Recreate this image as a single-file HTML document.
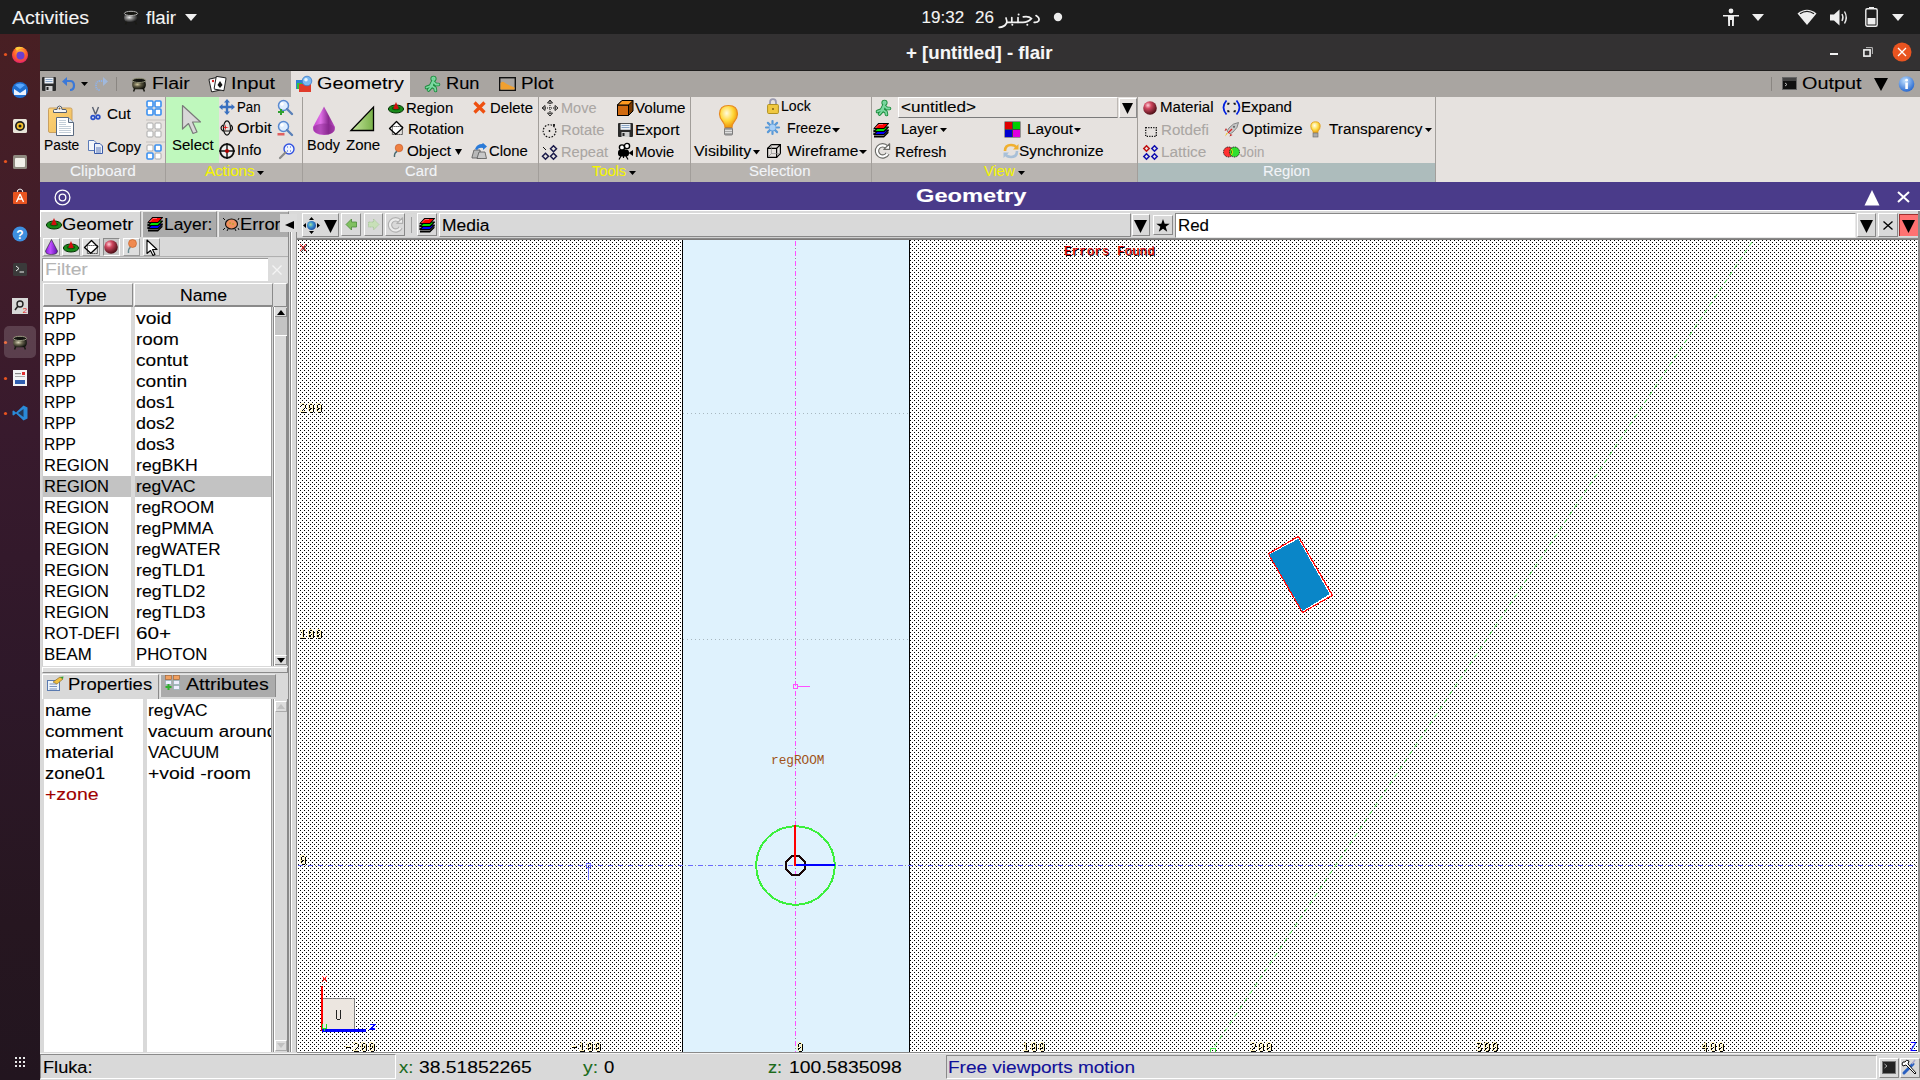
<!DOCTYPE html>
<html><head><meta charset="utf-8">
<style>
*{box-sizing:border-box;margin:0;padding:0}
html,body{width:1920px;height:1080px;overflow:hidden;background:#1d1d1d;font-family:"Liberation Sans",sans-serif;position:relative}
.a{position:absolute}
.t{position:absolute;white-space:nowrap;transform-origin:0 0;-webkit-text-stroke:0.1px currentColor}
svg{overflow:visible}
</style></head><body>
<div class="a" style="left:0px;top:0px;width:1920px;height:34px;background:#1d1d1d;"></div>
<div class="t" style="left:12.00px;top:9px;font:normal 18px/18px 'Liberation Sans';color:#f4f4f4;transform:scaleX(1.0845);">Activities</div>
<svg class="a" style="left:123px;top:10px;" width="16" height="15" viewBox="0 0 16 15"><defs><radialGradient id="pot" cx="0.38" cy="0.4" r="0.62"><stop offset="0" stop-color="#e8e8e8"/><stop offset="0.45" stop-color="#7a7a7a"/><stop offset="1" stop-color="#1a1a1a"/></radialGradient></defs><path d="M1.8 4.2Q0 9.5 3.2 12.3H12.8Q16 9.5 14.2 4.2Z" fill="url(#pot)"/><ellipse cx="8" cy="3.4" rx="6.6" ry="2.1" fill="#141410" stroke="#b0b0b0" stroke-width="1"/><path d="M3.6 11.8L2.6 14.6M12.4 11.8L13.4 14.6" stroke="#1a1a14" stroke-width="1.5"/></svg>
<div class="t" style="left:146.00px;top:9px;font:normal 18px/18px 'Liberation Sans';color:#f4f4f4;transform:scaleX(1.0345);">flair</div>
<svg class="a" style="left:185px;top:14px;" width="12" height="7" viewBox="0 0 12 7"><path d="M0 0H12L6.0 7Z" fill="#f0f0f0"/></svg>
<div class="t" style="left:921.60px;top:9px;font:normal 17px/17px 'Liberation Sans';color:#f4f4f4;">19:32</div>
<div class="t" style="left:975.00px;top:9px;font:normal 17px/17px 'Liberation Sans';color:#f4f4f4;">26</div>
<svg class="a" style="left:996px;top:6px;" width="46" height="24" viewBox="0 0 46 24"><g fill="none" stroke="#f2f2f2" stroke-width="1.7" stroke-linecap="round"><path d="M40 9.6Q44 12 42.8 14.8Q41.5 16.6 38.2 16.3"/><path d="M27.3 10.9Q33 10 35.4 12.6Q32 16.3 27 16.3H11"/><path d="M15.8 11.6V16.3M22 11.6V16.3"/><path d="M10 12Q11.2 15 10.6 17Q8.5 21.2 3.2 21.3"/></g><circle cx="22.6" cy="8.4" r="1" fill="#f2f2f2"/><circle cx="16.3" cy="18.8" r="1" fill="#f2f2f2"/><circle cx="31.3" cy="18.8" r="1" fill="#f2f2f2"/></svg>
<svg class="a" style="left:1053px;top:12px;" width="10" height="10" viewBox="0 0 10 10"><circle cx="5" cy="5" r="4.2" fill="#ececec"/></svg>
<svg class="a" style="left:1723px;top:8px;" width="16" height="18" viewBox="0 0 16 18"><circle cx="8" cy="3" r="2.4" fill="#eee"/><path d="M0 7H16V8.6H11V11L10.8 18H9V12H7V18H5.2L5 11V8.6H0Z" fill="#eee"/></svg>
<svg class="a" style="left:1752px;top:14px;" width="12" height="7" viewBox="0 0 12 7"><path d="M0 0H12L6.0 7Z" fill="#eee"/></svg>
<svg class="a" style="left:1797px;top:9px;" width="20" height="17" viewBox="0 0 20 17"><path d="M10 16L0.5 4.5Q10 -3 19.5 4.5Z" fill="#eee"/><path d="M3 4.8Q10 0 17 4.8" stroke="#1d1d1d" stroke-width="1.2" fill="none"/></svg>
<svg class="a" style="left:1830px;top:9px;" width="19" height="17" viewBox="0 0 19 17"><path d="M0 5.5H4L9.5 0.5V16.5L4 11.5H0Z" fill="#eee"/><path d="M12 5Q14 8.5 12 12" stroke="#eee" stroke-width="1.4" fill="none"/><path d="M14.5 2.5Q18 8.5 14.5 14.5" stroke="#eee" stroke-width="1.4" fill="none"/></svg>
<svg class="a" style="left:1865px;top:7px;" width="13" height="20" viewBox="0 0 13 20"><rect x="4" y="0" width="5" height="2" fill="#eee"/><rect x="0.8" y="1.8" width="11.4" height="17.4" rx="1.5" fill="none" stroke="#eee" stroke-width="1.4"/><rect x="2.5" y="11" width="8" height="6.5" fill="#eee"/></svg>
<svg class="a" style="left:1892px;top:14px;" width="12" height="7" viewBox="0 0 12 7"><path d="M0 0H12L6.0 7Z" fill="#eee"/></svg>
<div class="a" style="left:0px;top:34px;width:40px;height:1046px;background:linear-gradient(#481f23 0%,#421d29 18%,#381a2d 38%,#2e1829 62%,#261620 85%,#22151f 100%);"></div>
<svg class="a" style="left:3px;top:52px;" width="5" height="5" viewBox="0 0 5 5"><circle cx="2.5" cy="2.5" r="1.6" fill="#e95420"/></svg>
<svg class="a" style="left:3px;top:159px;" width="5" height="5" viewBox="0 0 5 5"><circle cx="2.5" cy="2.5" r="1.6" fill="#e95420"/></svg>
<svg class="a" style="left:3px;top:340px;" width="5" height="5" viewBox="0 0 5 5"><circle cx="2.5" cy="2.5" r="1.6" fill="#e95420"/></svg>
<svg class="a" style="left:3px;top:376px;" width="5" height="5" viewBox="0 0 5 5"><circle cx="2.5" cy="2.5" r="1.6" fill="#e95420"/></svg>
<svg class="a" style="left:3px;top:411px;" width="5" height="5" viewBox="0 0 5 5"><circle cx="2.5" cy="2.5" r="1.6" fill="#e95420"/></svg>
<svg class="a" style="left:11px;top:45px;" width="18" height="18" viewBox="0 0 18 18"><defs><radialGradient id="ff" cx="0.5" cy="0.3" r="0.7"><stop offset="0" stop-color="#ffbd3a"/><stop offset="0.6" stop-color="#ff5a2a"/><stop offset="1" stop-color="#e3226e"/></radialGradient></defs><circle cx="9" cy="10" r="8" fill="url(#ff)"/><circle cx="9.5" cy="10.5" r="4" fill="#6b3fd0"/><path d="M4 3Q9 0 14 4Q9 2 6 6Z" fill="#ffca3a"/></svg>
<svg class="a" style="left:12px;top:82px;" width="16" height="16" viewBox="0 0 16 16"><circle cx="8" cy="8" r="8" fill="#1f6fd0"/><path d="M2 7L8 11L14 7V13H2Z" fill="#eaf2ff"/><path d="M3 3Q8 0 13 3L8 7Z" fill="#5aa8ff"/></svg>
<svg class="a" style="left:13px;top:119px;" width="14" height="14" viewBox="0 0 14 14"><rect width="14" height="14" rx="1.5" fill="#e8e4d8"/><circle cx="7" cy="7" r="5" fill="#1e1e1e"/><circle cx="7" cy="7" r="3.3" fill="#f5c02a"/><circle cx="7" cy="7" r="1.5" fill="#1e1e1e"/></svg>
<svg class="a" style="left:13px;top:155px;" width="14" height="14" viewBox="0 0 14 14"><rect width="14" height="14" rx="1.5" fill="#8f8a80"/><rect x="2" y="3" width="10" height="9" rx="1" fill="#f2f0ea"/></svg>
<svg class="a" style="left:13px;top:189px;" width="14" height="15" viewBox="0 0 14 15"><path d="M4 4Q4 0 7 0Q10 0 10 4" stroke="#f2f2f2" stroke-width="1" fill="none"/><rect y="3" width="14" height="12" rx="1" fill="#e95420"/><path d="M7 5L3.5 13M7 5L10.5 13M4.8 10H9.2" stroke="#fff" stroke-width="1.3"/></svg>
<svg class="a" style="left:12px;top:226px;" width="16" height="16" viewBox="0 0 16 16"><circle cx="8" cy="8" r="7.5" fill="#3d8fe0"/><text x="8" y="12.5" font-family="Liberation Sans" font-weight="bold" font-size="12" fill="#fff" text-anchor="middle">?</text></svg>
<svg class="a" style="left:13px;top:263px;" width="14" height="13" viewBox="0 0 14 13"><rect width="14" height="13" rx="1.5" fill="#3a3a3a"/><path d="M3 3L6 5.5L3 8" stroke="#eee" stroke-width="1" fill="none"/><path d="M6.5 9H11" stroke="#eee" stroke-width="1"/></svg>
<svg class="a" style="left:12px;top:298px;" width="16" height="16" viewBox="0 0 16 16"><rect width="16" height="16" fill="#d8d8d8"/><circle cx="8" cy="6" r="3" fill="none" stroke="#222" stroke-width="1.4"/><path d="M6 8L3 12" stroke="#222" stroke-width="1.6"/><text x="13" y="15" font-family="Liberation Sans" font-size="8" fill="#e02020" text-anchor="middle">2</text></svg>
<div class="a" style="left:4px;top:326px;width:32px;height:32px;background:rgba(255,255,255,0.16);border-radius:5px"></div>
<svg class="a" style="left:12px;top:335px;" width="16" height="15" viewBox="0 0 16 15"><defs><radialGradient id="pot2" cx="0.38" cy="0.4" r="0.62"><stop offset="0" stop-color="#d8d4b8"/><stop offset="0.45" stop-color="#6a6650"/><stop offset="1" stop-color="#141410"/></radialGradient></defs><path d="M1.8 4.2Q0 9.5 3.2 12.3H12.8Q16 9.5 14.2 4.2Z" fill="url(#pot2)"/><ellipse cx="8" cy="3.4" rx="6.6" ry="2.1" fill="#141410" stroke="#9a9880" stroke-width="1"/><path d="M3.6 11.8L2.6 14.6M12.4 11.8L13.4 14.6" stroke="#1a1a14" stroke-width="1.5"/></svg>
<svg class="a" style="left:13px;top:370px;" width="14" height="16" viewBox="0 0 14 16"><rect width="14" height="16" fill="#f4f4f4"/><rect x="2" y="3" width="6" height="1.2" fill="#888"/><rect x="2" y="6" width="10" height="1" fill="#aaa"/><rect x="9" y="2" width="3" height="3" fill="#e03030"/><rect x="2" y="10" width="10" height="4" fill="#3060b0"/></svg>
<svg class="a" style="left:12px;top:405px;" width="16" height="16" viewBox="0 0 16 16"><path d="M11.5 0.5L15.5 2.5V13.5L11.5 15.5L4 8.5L1.5 10.5L0.5 10V6L1.5 5.5L4 7.5Z" fill="#2a8ad8"/><path d="M11.5 4L6 8L11.5 12Z" fill="#22151f" opacity="0.7"/></svg>
<svg class="a" style="left:15px;top:1057px;" width="10" height="10" viewBox="0 0 10 10"><rect x="0" y="0" width="2" height="2" fill="#e8e8e8"/><rect x="0" y="4" width="2" height="2" fill="#e8e8e8"/><rect x="0" y="8" width="2" height="2" fill="#e8e8e8"/><rect x="4" y="0" width="2" height="2" fill="#e8e8e8"/><rect x="4" y="4" width="2" height="2" fill="#e8e8e8"/><rect x="4" y="8" width="2" height="2" fill="#e8e8e8"/><rect x="8" y="0" width="2" height="2" fill="#e8e8e8"/><rect x="8" y="4" width="2" height="2" fill="#e8e8e8"/><rect x="8" y="8" width="2" height="2" fill="#e8e8e8"/></svg>
<div class="a" style="left:40px;top:34px;width:1880px;height:37px;background:#333132;"></div>
<div class="a" style="left:40px;top:70px;width:1880px;height:1px;background:#1e1d1d;"></div>
<div class="t" style="left:906.40px;top:43px;font:bold 19px/19px 'Liberation Sans';color:#f6f6f6;transform:scaleX(0.9807);">+ [untitled] - flair</div>
<div class="a" style="left:1830px;top:53px;width:8px;height:2px;background:#f2f2f2;"></div>
<svg class="a" style="left:1863px;top:47px;" width="10" height="10" viewBox="0 0 10 10"><rect x="0.9" y="2.9" width="6.2" height="6.2" fill="none" stroke="#f2f2f2" stroke-width="1.6"/><path d="M3 0.6H9.4V7" fill="none" stroke="#bbb" stroke-width="1"/></svg>
<svg class="a" style="left:1892px;top:42px;" width="20" height="20" viewBox="0 0 20 20"><circle cx="10" cy="10" r="9.5" fill="#e95420"/><path d="M6 6L14 14M14 6L6 14" stroke="#fff" stroke-width="1.3"/></svg>
<div class="a" style="left:40px;top:71px;width:1880px;height:26px;background:#a9a5a1;"></div>
<div class="a" style="left:291px;top:71px;width:119px;height:26px;background:#e6e2df;"></div>
<svg class="a" style="left:42px;top:77px;" width="14" height="14" viewBox="0 0 14 14"><rect width="14" height="14" rx="1" fill="#2a2a2a"/><rect x="2.5" y="0.5" width="9" height="6" fill="#eef2f8"/><path d="M3.5 2.5H10.5M3.5 4.5H10.5" stroke="#7090b8" stroke-width="0.8"/><rect x="3.5" y="9" width="7" height="5" fill="#cfcfcf"/><rect x="4.5" y="10" width="2" height="3" fill="#222"/></svg>
<svg class="a" style="left:62px;top:77px;" width="13" height="14" viewBox="0 0 13 14"><path d="M4 4H8Q12 4 12 8.5Q12 13 8 13" stroke="#3a78d8" stroke-width="2.2" fill="none"/><path d="M0 4.5L5 0V9Z" fill="#3a78d8"/></svg>
<svg class="a" style="left:81px;top:82px;" width="7" height="4" viewBox="0 0 7 4"><path d="M0 0H7L3.5 4Z" fill="#000"/></svg>
<svg class="a" style="left:95px;top:77px;" width="13" height="14" viewBox="0 0 13 14"><path d="M9 4H5Q1 4 1 8.5Q1 13 5 13" stroke="#8fb2e8" stroke-width="1.8" fill="none" stroke-dasharray="1.2 0.8"/><path d="M13 4.5L8 0V9Z" fill="#9fbde8" opacity="0.8"/></svg>
<div class="a" style="left:116px;top:77px;width:1px;height:14px;background:#8a8682;"></div>
<svg class="a" style="left:131px;top:77px;" width="16" height="15" viewBox="0 0 16 15"><defs><radialGradient id="pot3" cx="0.38" cy="0.4" r="0.62"><stop offset="0" stop-color="#d0c8a0"/><stop offset="0.45" stop-color="#5a5640"/><stop offset="1" stop-color="#12120c"/></radialGradient></defs><path d="M1.8 4.2Q0 9.5 3.2 12.3H12.8Q16 9.5 14.2 4.2Z" fill="url(#pot3)"/><ellipse cx="8" cy="3.4" rx="6.6" ry="2.1" fill="#141410" stroke="#8a8a70" stroke-width="1"/><path d="M3.6 11.8L2.6 14.6M12.4 11.8L13.4 14.6" stroke="#1a1a14" stroke-width="1.5"/></svg>
<div class="t" style="left:152.30px;top:75px;font:normal 17px/17px 'Liberation Sans';color:#000;transform:scaleX(1.1424);">Flair</div>
<svg class="a" style="left:209px;top:76px;" width="18" height="16" viewBox="0 0 18 16"><rect x="1" y="2" width="10" height="13" rx="1" fill="#fff" stroke="#222" stroke-width="1" transform="rotate(-12 6 8)"/><rect x="6" y="1" width="10" height="13" rx="1" fill="#fff" stroke="#222" stroke-width="1" transform="rotate(10 11 8)"/><path d="M11 5L13.5 9L11 12L8.5 9Z" fill="#111"/><circle cx="4" cy="5" r="1.2" fill="#d02020"/></svg>
<div class="t" style="left:230.70px;top:75px;font:normal 17px/17px 'Liberation Sans';color:#000;transform:scaleX(1.1658);">Input</div>
<svg class="a" style="left:296px;top:76px;" width="17" height="16" viewBox="0 0 17 16"><rect x="0" y="4" width="8" height="9" fill="#2f7fd0"/><rect x="1" y="7" width="5" height="6" fill="#30c040"/><rect x="3" y="8" width="12" height="8" fill="#e03a2a"/><circle cx="11" cy="5" r="4.8" fill="#7ab8f0" stroke="#3a78c8" stroke-width="0.8"/><circle cx="10" cy="3.8" r="1.8" fill="#e8f4ff"/></svg>
<div class="t" style="left:316.70px;top:75px;font:normal 17px/17px 'Liberation Sans';color:#000;transform:scaleX(1.1640);">Geometry</div>
<svg class="a" style="left:425px;top:76px;" width="15" height="16" viewBox="0 0 15 16"><g stroke-linecap="round" stroke-linejoin="round" fill="none"><g stroke="#1a8a3a" stroke-width="3.6"><circle cx="8.5" cy="2.8" r="1.3"/><path d="M7.8 5.5L5.5 10L1.5 11.5M7.8 5.5L11 8.5L13.5 8.5M7.8 5.5L7 10L10 12L10.5 14.5M7 10L3.5 14"/></g><g stroke="#7ad8a0" stroke-width="1.8"><circle cx="8.5" cy="2.8" r="1.3"/><path d="M7.8 5.5L5.5 10L1.5 11.5M7.8 5.5L11 8.5L13.5 8.5M7.8 5.5L7 10L10 12L10.5 14.5M7 10L3.5 14"/></g></g></svg>
<div class="t" style="left:445.70px;top:75px;font:normal 17px/17px 'Liberation Sans';color:#000;transform:scaleX(1.0742);">Run</div>
<svg class="a" style="left:499px;top:77px;" width="17" height="14" viewBox="0 0 17 14"><rect x="0.7" y="0.7" width="15.6" height="12.6" fill="none" stroke="#111" stroke-width="1.4"/><path d="M1.5 12.5V6Q3.5 4 5.5 5.5Q8 7.5 11 8.5Q13 9.5 15.5 10.5V12.5Z" fill="#f0a030"/></svg>
<div class="t" style="left:520.70px;top:75px;font:normal 17px/17px 'Liberation Sans';color:#000;transform:scaleX(1.1100);">Plot</div>
<div class="a" style="left:1771px;top:77px;width:1px;height:14px;background:#8a8682;"></div>
<svg class="a" style="left:1782px;top:77px;" width="15" height="13" viewBox="0 0 15 13"><rect x="0.5" y="0.5" width="14" height="12" fill="#111" stroke="#666" stroke-width="1"/><rect x="1" y="1" width="13" height="3" fill="#444"/><path d="M3 6L5 7.5L3 9" stroke="#ddd" stroke-width="0.8" fill="none"/></svg>
<div class="t" style="left:1802.30px;top:75px;font:normal 17px/17px 'Liberation Sans';color:#000;transform:scaleX(1.1647);">Output</div>
<svg class="a" style="left:1874px;top:78px;" width="14" height="13" viewBox="0 0 14 13"><path d="M0 0H14L7.0 13Z" fill="#000"/></svg>
<svg class="a" style="left:1898px;top:76px;" width="17" height="16" viewBox="0 0 17 16"><defs><radialGradient id="inf" cx="0.4" cy="0.3" r="0.7"><stop offset="0" stop-color="#bfe0ff"/><stop offset="1" stop-color="#2a6ad0"/></radialGradient></defs><circle cx="8.5" cy="8" r="7.8" fill="url(#inf)"/><rect x="7.3" y="6.5" width="2.6" height="6.5" fill="#fff"/><circle cx="8.6" cy="4.2" r="1.4" fill="#fff"/></svg>
<div class="a" style="left:40px;top:97px;width:1880px;height:66px;background:#e6e2df;"></div>
<div class="a" style="left:40px;top:163px;width:1098px;height:19px;background:#b8b4b0;"></div>
<div class="a" style="left:1138px;top:163px;width:298px;height:19px;background:#adbcbc;"></div>
<div class="a" style="left:1436px;top:163px;width:484px;height:19px;background:#e6e2df;"></div>
<div class="a" style="left:165px;top:97px;width:1px;height:85px;background:#a29e9a;"></div>
<div class="a" style="left:302px;top:97px;width:1px;height:85px;background:#a29e9a;"></div>
<div class="a" style="left:538px;top:97px;width:1px;height:85px;background:#a29e9a;"></div>
<div class="a" style="left:690px;top:97px;width:1px;height:85px;background:#a29e9a;"></div>
<div class="a" style="left:871px;top:97px;width:1px;height:85px;background:#a29e9a;"></div>
<div class="a" style="left:1137px;top:97px;width:1px;height:85px;background:#a29e9a;"></div>
<div class="a" style="left:1435px;top:97px;width:1px;height:85px;background:#a29e9a;"></div>
<div class="a" style="left:146px;top:119px;width:19px;height:2px;background:#d6d2cf;"></div>
<div class="a" style="left:146px;top:141px;width:19px;height:2px;background:#d6d2cf;"></div>
<div class="a" style="left:166px;top:97px;width:53px;height:66px;background:#bff8bd;"></div>
<svg class="a" style="left:48px;top:105px;" width="27" height="32" viewBox="0 0 27 32"><defs><linearGradient id="clipg" x1="0" y1="0" x2="1" y2="1"><stop offset="0" stop-color="#ffd47a"/><stop offset="1" stop-color="#eebc5a"/></linearGradient></defs><rect x="0.5" y="3" width="23.5" height="24.5" rx="1.5" fill="url(#clipg)" stroke="#c9a060" stroke-width="1"/><path d="M5.5 7.5H18.5V5.5Q18.5 4.5 17 4.5H14Q14 1 11.5 1Q9 1 9 4.5H6.5Q5.5 4.5 5.5 5.5Z" fill="#f4f6f8" stroke="#556070" stroke-width="1"/><circle cx="11.5" cy="3.6" r="1" fill="#8a5a20"/><path d="M8.5 12.5H20.5L25.5 17.5V30.5H8.5Z" fill="#fff" stroke="#5a6a80" stroke-width="1"/><path d="M20.5 12.5V17.5H25.5" fill="#dde6f0" stroke="#5a6a80" stroke-width="1"/><path d="M11 15.5H18M11 17.5H18M11 19.5H18M11 21.5H23M11 23.5H23M11 25.5H23M11 27.5H23" stroke="#bcc8d4" stroke-width="0.9"/></svg>
<div class="t" style="left:43.50px;top:138px;font:normal 14px/14px 'Liberation Sans';color:#000;transform:scaleX(0.9861);">Paste</div>
<svg class="a" style="left:90px;top:106px;" width="11" height="15" viewBox="0 0 11 15"><path d="M2.5 1L5.5 8.5M8.5 1L5.5 8.5" stroke="#5a6070" stroke-width="1.4"/><circle cx="3" cy="11.5" r="2.7" fill="#2a50c8"/><circle cx="8" cy="11" r="2.7" fill="#2a50c8"/><circle cx="3" cy="11.5" r="0.9" fill="#e8ecf4"/><circle cx="8" cy="11" r="0.9" fill="#e8ecf4"/></svg>
<div class="t" style="left:106.50px;top:107px;font:normal 14px/14px 'Liberation Sans';color:#000;transform:scaleX(1.0909);">Cut</div>
<svg class="a" style="left:88px;top:140px;" width="16" height="14" viewBox="0 0 16 14"><path d="M0.5 0.5H6L8.5 3V10.5H0.5Z" fill="#f4f6fa" stroke="#5a7ab8" stroke-width="1"/><path d="M6.5 3.5H12L14.5 6V13.5H6.5Z" fill="#e8eef8" stroke="#3a5aa8" stroke-width="1"/><path d="M8 8H13M8 10H13M8 12H13" stroke="#3a5aa8" stroke-width="0.8"/></svg>
<div class="t" style="left:106.50px;top:140px;font:normal 14px/14px 'Liberation Sans';color:#000;transform:scaleX(1.0394);">Copy</div>
<svg class="a" style="left:146px;top:100px;" width="16" height="16" viewBox="0 0 16 16"><rect x="1" y="1" width="6" height="6" rx="1" fill="#fff" stroke="#3a90f0" stroke-width="1.6"/><rect x="9" y="1" width="6" height="6" rx="1" fill="#fff" stroke="#3a90f0" stroke-width="1.6"/><rect x="1" y="9" width="6" height="6" rx="1" fill="#fff" stroke="#3a90f0" stroke-width="1.6"/><rect x="9" y="9" width="6" height="6" rx="1" fill="#fff" stroke="#3a90f0" stroke-width="1.6"/></svg>
<svg class="a" style="left:146px;top:122px;" width="16" height="16" viewBox="0 0 16 16"><rect x="1" y="1" width="6" height="6" rx="1" fill="#fff" stroke="#aaa" stroke-width="1"/><rect x="9" y="1" width="6" height="6" rx="1" fill="#fff" stroke="#aaa" stroke-width="1"/><rect x="1" y="9" width="6" height="6" rx="1" fill="#fff" stroke="#aaa" stroke-width="1"/><rect x="9" y="9" width="6" height="6" rx="1" fill="#fff" stroke="#aaa" stroke-width="1"/></svg>
<svg class="a" style="left:146px;top:144px;" width="16" height="16" viewBox="0 0 16 16"><rect x="1" y="1" width="6" height="6" rx="1" fill="#fff" stroke="#aaa" stroke-width="1"/><rect x="9" y="1" width="6" height="6" rx="1" fill="#fff" stroke="#3a90f0" stroke-width="1.6"/><rect x="1" y="9" width="6" height="6" rx="1" fill="#fff" stroke="#3a90f0" stroke-width="1.6"/><rect x="9" y="9" width="6" height="6" rx="1" fill="#fff" stroke="#aaa" stroke-width="1"/></svg>
<div class="t" style="left:69.50px;top:164px;font:normal 14px/14px 'Liberation Sans';color:#f2f4f8;transform:scaleX(1.0967);">Clipboard</div>
<svg class="a" style="left:181px;top:104px;" width="21" height="31" viewBox="0 0 21 31"><path d="M1.5 1.5L19.5 18H11.5L16 28L12 29.5L7.5 19.5L1.5 25Z" fill="#d8d8d8" stroke="#7a7a7a" stroke-width="1.2" stroke-linejoin="round"/></svg>
<div class="t" style="left:171.80px;top:138px;font:normal 14px/14px 'Liberation Sans';color:#000;transform:scaleX(1.0692);">Select</div>
<svg class="a" style="left:219px;top:99px;" width="16" height="16" viewBox="0 0 16 16"><path d="M8 0L11 3.5H9.2V6.8H12.5V5L16 8L12.5 11V9.2H9.2V12.5H11L8 16L5 12.5H6.8V9.2H3.5V11L0 8L3.5 5V6.8H6.8V3.5H5Z" fill="#3a70c0"/></svg>
<div class="t" style="left:236.80px;top:100px;font:normal 14px/14px 'Liberation Sans';color:#000;transform:scaleX(0.9440);">Pan</div>
<svg class="a" style="left:219px;top:120px;" width="16" height="16" viewBox="0 0 16 16"><ellipse cx="8" cy="8" rx="3.5" ry="7.2" fill="none" stroke="#111" stroke-width="1.2"/><path d="M4 5Q0 8 4 11H12Q15 8 12 5" fill="none" stroke="#111" stroke-width="1.2"/><path d="M7 8L4 7.5L7 7L7.5 4L8 7L11 7.5L8 8L7.5 11Z" fill="#e01010" transform="translate(-1 0)"/></svg>
<div class="t" style="left:237.00px;top:121px;font:normal 14px/14px 'Liberation Sans';color:#000;transform:scaleX(1.1467);">Orbit</div>
<svg class="a" style="left:219px;top:143px;" width="16" height="16" viewBox="0 0 16 16"><circle cx="8" cy="8" r="6.8" fill="#f0f0f0" stroke="#111" stroke-width="1.8"/><path d="M8 0V16M0 8H16" stroke="#111" stroke-width="1.4"/><circle cx="8" cy="8" r="2" fill="#b00000"/></svg>
<div class="t" style="left:237.00px;top:143px;font:normal 14px/14px 'Liberation Sans';color:#000;transform:scaleX(1.0417);">Info</div>
<svg class="a" style="left:277px;top:99px;" width="16" height="16" viewBox="0 0 16 16"><circle cx="6.5" cy="6.5" r="5" fill="#dfeeff" stroke="#5a8ad0" stroke-width="1.5"/><circle cx="5" cy="5" r="1.8" fill="#fff"/><path d="M10 10L15 15" stroke="#5a80b8" stroke-width="2.4" stroke-linecap="round"/><path d="M4 10V16M1 13H7" stroke="#30a030" stroke-width="2"/></svg>
<svg class="a" style="left:277px;top:120px;" width="16" height="16" viewBox="0 0 16 16"><circle cx="6.5" cy="6.5" r="5" fill="#dfeeff" stroke="#5a8ad0" stroke-width="1.5"/><circle cx="5" cy="5" r="1.8" fill="#fff"/><path d="M10 10L15 15" stroke="#5a80b8" stroke-width="2.4" stroke-linecap="round"/><rect x="0.5" y="13" width="7" height="2.5" fill="#e06060"/></svg>
<svg class="a" style="left:279px;top:143px;" width="16" height="16" viewBox="0 0 16 16"><circle cx="10" cy="6" r="5" fill="#eef4ff" stroke="#3050e0" stroke-width="1.4"/><path d="M8 4H9M11 4H12M8 8H9M11 8H12" stroke="#3050e0" stroke-width="1.2"/><path d="M6.5 9.5L1 15" stroke="#8a8a8a" stroke-width="2.2" stroke-linecap="round"/></svg>
<div class="t" style="left:205.30px;top:164px;font:normal 14px/14px 'Liberation Sans';color:#f4f400;transform:scaleX(1.0783);">Actions</div>
<svg class="a" style="left:257px;top:171px;" width="7" height="4" viewBox="0 0 7 4"><path d="M0 0H7L3.5 4Z" fill="#000"/></svg>
<svg class="a" style="left:311px;top:106px;" width="26" height="30" viewBox="0 0 26 30"><defs><linearGradient id="cone" x1="0" x2="1"><stop offset="0" stop-color="#c040c8"/><stop offset="0.35" stop-color="#e070e8"/><stop offset="0.7" stop-color="#8a2a90"/><stop offset="1" stop-color="#c050c8"/></linearGradient></defs><path d="M13 0.5L24 21Q24 29 13 29Q2 29 2 21Z" fill="url(#cone)"/><ellipse cx="13" cy="23" rx="11" ry="5.5" fill="#8a2890" opacity="0.5"/></svg>
<div class="t" style="left:306.70px;top:138px;font:normal 14px/14px 'Liberation Sans';color:#000;transform:scaleX(1.0312);">Body</div>
<svg class="a" style="left:350px;top:106px;" width="25" height="26" viewBox="0 0 25 26"><defs><linearGradient id="zn" x1="0" x2="1"><stop offset="0" stop-color="#c8e8a0"/><stop offset="1" stop-color="#78b048"/></linearGradient></defs><path d="M1 24.5L23.5 1V24.5Z" fill="url(#zn)" stroke="#000" stroke-width="1.3"/></svg>
<div class="t" style="left:346.00px;top:138px;font:normal 14px/14px 'Liberation Sans';color:#000;transform:scaleX(1.0719);">Zone</div>
<svg class="a" style="left:388px;top:101px;" width="16" height="13" viewBox="0 0 16 13"><ellipse cx="8" cy="8" rx="7.6" ry="4" fill="#1a8a1a" stroke="#043004" stroke-width="1"/><ellipse cx="8" cy="7.4" rx="4.2" ry="1.8" fill="#0a5a0a"/><path d="M5.2 7.5L8 1L10.8 7.5Q8 9 5.2 7.5Z" fill="#d01010"/></svg>
<div class="t" style="left:406.20px;top:101px;font:normal 14px/14px 'Liberation Sans';color:#000;transform:scaleX(1.0636);">Region</div>
<svg class="a" style="left:473px;top:101px;" width="13" height="13" viewBox="0 0 13 13"><path d="M1.5 1.5L11.5 11.5M11.5 1.5L1.5 11.5" stroke="#ee5010" stroke-width="3.2"/></svg>
<div class="t" style="left:489.50px;top:101px;font:normal 14px/14px 'Liberation Sans';color:#000;transform:scaleX(1.0610);">Delete</div>
<svg class="a" style="left:389px;top:121px;" width="15" height="15" viewBox="0 0 15 15"><path d="M7.5 0.5L13.8 6.8L6.8 13.2L0.5 7.5Z" fill="#fff" stroke="#000" stroke-width="1.3" stroke-linejoin="round"/><rect x="3.4" y="5.5" width="10" height="8" fill="none" stroke="#000" stroke-width="1.1" stroke-dasharray="1 1"/></svg>
<div class="t" style="left:407.50px;top:122px;font:normal 14px/14px 'Liberation Sans';color:#000;transform:scaleX(1.0731);">Rotation</div>
<svg class="a" style="left:393px;top:144px;" width="10" height="15" viewBox="0 0 10 15"><circle cx="6" cy="4" r="3.8" fill="#f08040" stroke="#c05020" stroke-width="0.6"/><path d="M4 7.5Q1 9 1.5 13" stroke="#4a6a70" stroke-width="1.4" fill="none"/></svg>
<div class="t" style="left:406.60px;top:144px;font:normal 14px/14px 'Liberation Sans';color:#000;transform:scaleX(1.0902);">Object</div>
<svg class="a" style="left:455px;top:149px;" width="7" height="6" viewBox="0 0 7 6"><path d="M0 0H7L3.5 6Z" fill="#000"/></svg>
<svg class="a" style="left:471px;top:143px;" width="17" height="16" viewBox="0 0 17 16"><path d="M1 14L3 7H9L10 15H1Z" fill="#b8b8b8" stroke="#555" stroke-width="0.8"/><path d="M6 15.5L8 9H14L15.5 15.5Z" fill="#c8c8c8" stroke="#555" stroke-width="0.8"/><path d="M4 6Q6 1 11 1L12 0L16 3.5L12 7L12 5Q8 4 6 7Z" fill="#2a7ad8"/></svg>
<div class="t" style="left:489.00px;top:144px;font:normal 14px/14px 'Liberation Sans';color:#000;transform:scaleX(1.0595);">Clone</div>
<div class="t" style="left:404.50px;top:164px;font:normal 14px/14px 'Liberation Sans';color:#f2f4f8;transform:scaleX(1.0600);">Card</div>
<svg class="a" style="left:542px;top:100px;" width="16" height="16" viewBox="0 0 16 16"><g fill="none" stroke="#111" stroke-width="1" stroke-dasharray="1 1"><path d="M8 1V15M1 8H15"/></g><path d="M8 0L10.5 3H5.5ZM8 16L10.5 13H5.5ZM0 8L3 5.5V10.5ZM16 8L13 5.5V10.5Z" fill="none" stroke="#111" stroke-width="0.9"/></svg>
<div class="t" style="left:560.80px;top:101px;font:normal 14px/14px 'Liberation Sans';color:#aaa6a3;transform:scaleX(1.0353);">Move</div>
<svg class="a" style="left:542px;top:123px;" width="16" height="15" viewBox="0 0 16 15"><circle cx="7.5" cy="8" r="6.3" fill="none" stroke="#111" stroke-width="1.2" stroke-dasharray="1.6 1.4"/><circle cx="7.5" cy="8" r="0.9" fill="#111"/><path d="M11 1L13 3M13 1L11 3" stroke="#111" stroke-width="0.9"/></svg>
<div class="t" style="left:561.00px;top:123px;font:normal 14px/14px 'Liberation Sans';color:#aaa6a3;transform:scaleX(1.0537);">Rotate</div>
<svg class="a" style="left:542px;top:145px;" width="16" height="15" viewBox="0 0 16 15"><path d="M1 2L4 5" stroke="#111" stroke-width="1"/><g fill="none" stroke="#1a1a4a" stroke-width="1.5"><path d="M11.5 0.8L14.5 3.8L11.5 6.8L8.5 3.8Z"/><path d="M3.5 8.2L6.5 11.2L3.5 14.2L0.5 11.2Z"/><path d="M11.5 8.2L14.5 11.2L11.5 14.2L8.5 11.2Z"/></g></svg>
<div class="t" style="left:561.00px;top:145px;font:normal 14px/14px 'Liberation Sans';color:#aaa6a3;transform:scaleX(1.0444);">Repeat</div>
<svg class="a" style="left:617px;top:100px;" width="17" height="16" viewBox="0 0 17 16"><path d="M0.5 5L5 0.5H16L16 11L11.5 15.5H0.5Z" fill="#7a3a00" stroke="#000" stroke-width="1"/><path d="M0.5 5H11.5V15.5H0.5Z" fill="#d06a10" stroke="#000" stroke-width="1"/><path d="M0.5 5L5 0.5H16L11.5 5Z" fill="#ff9a20" stroke="#000" stroke-width="1"/></svg>
<div class="t" style="left:635.00px;top:101px;font:normal 14px/14px 'Liberation Sans';color:#000;transform:scaleX(1.0809);">Volume</div>
<svg class="a" style="left:618px;top:123px;" width="15" height="14" viewBox="0 0 15 14"><rect width="15" height="14" rx="1" fill="#2a2a2a"/><rect x="2.5" y="0.8" width="10" height="6" fill="#eef2f8"/><path d="M3.5 2.5H11.5M3.5 4.5H11.5" stroke="#7090b8" stroke-width="0.8"/><rect x="3.5" y="9" width="8" height="5" fill="#cfcfcf"/><rect x="4.5" y="10" width="2" height="3" fill="#222"/></svg>
<div class="t" style="left:635.00px;top:123px;font:normal 14px/14px 'Liberation Sans';color:#000;transform:scaleX(1.1024);">Export</div>
<svg class="a" style="left:618px;top:143px;" width="15" height="17" viewBox="0 0 15 17"><circle cx="4" cy="4.5" r="2.6" fill="#fff" stroke="#000" stroke-width="1.4"/><circle cx="9" cy="3" r="2.6" fill="#fff" stroke="#000" stroke-width="1.4"/><rect x="0" y="6.5" width="11" height="7" rx="3" fill="#000"/><path d="M10.5 10L15 7V13Z" fill="#000"/><path d="M3 13L1 16.5M8 13L10 16.5M5.5 13V15" stroke="#000" stroke-width="1.2"/></svg>
<div class="t" style="left:635.00px;top:145px;font:normal 14px/14px 'Liberation Sans';color:#000;transform:scaleX(1.0526);">Movie</div>
<div class="t" style="left:592.00px;top:164px;font:normal 14px/14px 'Liberation Sans';color:#f4f400;transform:scaleX(1.0455);">Tools</div>
<svg class="a" style="left:629px;top:171px;" width="7" height="4" viewBox="0 0 7 4"><path d="M0 0H7L3.5 4Z" fill="#000"/></svg>
<svg class="a" style="left:718px;top:104px;" width="21" height="32" viewBox="0 0 21 32"><defs><radialGradient id="bulb" cx="0.4" cy="0.35" r="0.6"><stop offset="0" stop-color="#fffbe0"/><stop offset="0.6" stop-color="#ffd83a"/><stop offset="1" stop-color="#f0a010"/></radialGradient></defs><path d="M10.5 1.5Q19.5 1.5 19.5 10Q19.5 14 16 18Q14 20.5 14 23.5H7Q7 20.5 5 18Q1.5 14 1.5 10Q1.5 1.5 10.5 1.5Z" fill="url(#bulb)" stroke="#e88a20" stroke-width="1.2"/><rect x="6.5" y="24" width="8" height="7" rx="1" fill="#a8a8a8" stroke="#6a6a6a" stroke-width="0.8"/><path d="M7 26.5H14M7 28.5H14" stroke="#eee" stroke-width="0.8"/></svg>
<div class="t" style="left:693.50px;top:144px;font:normal 14px/14px 'Liberation Sans';color:#000;transform:scaleX(1.1380);">Visibility</div>
<svg class="a" style="left:753px;top:149.5px;" width="7" height="4.5" viewBox="0 0 7 4.5"><path d="M0 0H7L3.5 4.5Z" fill="#000"/></svg>
<svg class="a" style="left:767px;top:98px;" width="12" height="16" viewBox="0 0 12 16"><path d="M3 7V4.5Q3 1.2 6 1.2Q9 1.2 9 4.5V7" fill="none" stroke="#9a9ab0" stroke-width="1.8"/><rect x="0.6" y="6.5" width="10.8" height="9" rx="1" fill="#f0c840" stroke="#b09020" stroke-width="1"/><circle cx="6" cy="11" r="1" fill="#806010"/></svg>
<div class="t" style="left:780.60px;top:99px;font:normal 14px/14px 'Liberation Sans';color:#000;transform:scaleX(1.0065);">Lock</div>
<svg class="a" style="left:765px;top:120px;" width="15" height="15" viewBox="0 0 15 15"><g stroke="#5a9ad8" stroke-width="2.2" stroke-linecap="round"><path d="M7.5 1V14M1 7.5H14M2.9 2.9L12.1 12.1M12.1 2.9L2.9 12.1"/></g><circle cx="7.5" cy="7.5" r="3" fill="#a8d0f8"/></svg>
<div class="t" style="left:786.50px;top:121px;font:normal 14px/14px 'Liberation Sans';color:#000;transform:scaleX(1.0114);">Freeze</div>
<svg class="a" style="left:832px;top:127.5px;" width="8" height="4.5" viewBox="0 0 8 4.5"><path d="M0 0H8L4.0 4.5Z" fill="#000"/></svg>
<svg class="a" style="left:767px;top:144px;" width="14" height="14" viewBox="0 0 14 14"><g fill="none" stroke="#000" stroke-width="1.2"><path d="M0.6 4.4H9.6V13.4H0.6Z"/><path d="M0.6 4.4L4.4 0.6H13.4V9.6L9.6 13.4M9.6 4.4L13.4 0.6"/></g><g fill="none" stroke="#888" stroke-width="0.7"><path d="M4.4 0.6V9.6H13.4M4.4 9.6L0.6 13.4"/></g></svg>
<div class="t" style="left:786.50px;top:144px;font:normal 14px/14px 'Liberation Sans';color:#000;transform:scaleX(1.1046);">Wireframe</div>
<svg class="a" style="left:859px;top:150px;" width="8" height="4" viewBox="0 0 8 4"><path d="M0 0H8L4.0 4Z" fill="#000"/></svg>
<div class="t" style="left:749.40px;top:164px;font:normal 14px/14px 'Liberation Sans';color:#f2f4f8;transform:scaleX(1.0672);">Selection</div>
<svg class="a" style="left:876px;top:100px;" width="15" height="16" viewBox="0 0 15 16"><g stroke-linecap="round" stroke-linejoin="round" fill="none"><g stroke="#1a8a3a" stroke-width="3.6"><circle cx="8.5" cy="2.8" r="1.3"/><path d="M7.8 5.5L5.5 10L1.5 11.5M7.8 5.5L11 8.5L13.5 8.5M7.8 5.5L7 10L10 12L10.5 14.5M7 10L3.5 14"/></g><g stroke="#7ad8a0" stroke-width="1.8"><circle cx="8.5" cy="2.8" r="1.3"/><path d="M7.8 5.5L5.5 10L1.5 11.5M7.8 5.5L11 8.5L13.5 8.5M7.8 5.5L7 10L10 12L10.5 14.5M7 10L3.5 14"/></g></g></svg>
<div class="a" style="left:898px;top:97px;width:220px;height:21px;background:#e6e2df;border-top:1px solid #fff;border-left:1px solid #fff;border-bottom:1.5px solid #7a7a7a;border-right:1px solid #bdb9b5"></div>
<div class="t" style="left:901.00px;top:100px;font:normal 14px/14px 'Liberation Sans';color:#000;transform:scaleX(1.2197);">&lt;untitled&gt;</div>
<div class="a" style="left:1119px;top:98px;width:18px;height:20px;background:#e6e2df;border-top:1px solid #fff;border-left:1px solid #fff;border-bottom:1px solid #8a8a8a;border-right:1px solid #8a8a8a"></div>
<svg class="a" style="left:1122px;top:103px;" width="11" height="11" viewBox="0 0 11 11"><path d="M0 0H11L5.5 11Z" fill="#000"/></svg>
<svg class="a" style="left:873px;top:122px;" width="17" height="16" viewBox="0 0 17 16"><path d="M1 13.5H11L15.5 9V11L11 15.5H1Z" fill="#000"/><path d="M1 12.5L5.5 8H15.5L11 12.5Z" fill="#0000ff" stroke="#000" stroke-width="1.1" stroke-linejoin="round"/><path d="M1 12.5V10.5" stroke="#000" stroke-width="1.1"/><path d="M1 9.5L5.5 5H15.5L11 9.5Z" fill="#00e000" stroke="#000" stroke-width="1.1" stroke-linejoin="round"/><path d="M1 9.5V7.5" stroke="#000" stroke-width="1.1"/><path d="M1 6.5L5.5 1.5H15.5L11 6.5Z" fill="#ff0000" stroke="#000" stroke-width="1.1" stroke-linejoin="round"/><path d="M2.5 6L6 2.5H10" stroke="#ff8080" stroke-width="0.8" fill="none"/></svg>
<div class="t" style="left:900.70px;top:122px;font:normal 14px/14px 'Liberation Sans';color:#000;transform:scaleX(1.0429);">Layer</div>
<svg class="a" style="left:940px;top:128px;" width="7" height="4" viewBox="0 0 7 4"><path d="M0 0H7L3.5 4Z" fill="#000"/></svg>
<svg class="a" style="left:875px;top:143px;" width="16" height="16" viewBox="0 0 16 16"><path d="M11.8 4.2A5.6 5.6 0 1 0 12.6 10.4" fill="none" stroke="#6a6a66" stroke-width="4.4"/><path d="M11.8 4.2A5.6 5.6 0 1 0 12.6 10.4" fill="none" stroke="#fff" stroke-width="2.2"/><path d="M8.8 6.4L14.6 6.4V0.8Z" fill="#fff" stroke="#6a6a66" stroke-width="1.2" stroke-linejoin="round"/></svg>
<div class="t" style="left:894.80px;top:145px;font:normal 14px/14px 'Liberation Sans';color:#000;transform:scaleX(1.0510);">Refresh</div>
<svg class="a" style="left:1004px;top:121px;" width="17" height="17" viewBox="0 0 17 17"><rect x="0.5" y="0.5" width="16" height="16" fill="#444"/><rect x="1" y="1" width="7" height="7" fill="#e00000"/><rect x="9" y="1" width="7" height="7" fill="#00d000"/><rect x="1" y="9" width="7" height="7" fill="#0000d0"/><rect x="9" y="9" width="7" height="7" fill="#e000e0"/></svg>
<div class="t" style="left:1026.50px;top:122px;font:normal 14px/14px 'Liberation Sans';color:#000;transform:scaleX(1.0952);">Layout</div>
<svg class="a" style="left:1074px;top:128px;" width="7" height="4" viewBox="0 0 7 4"><path d="M0 0H7L3.5 4Z" fill="#000"/></svg>
<svg class="a" style="left:1003px;top:143px;" width="16" height="16" viewBox="0 0 16 16"><path d="M2 8Q2 2 8 2Q12 2 14 5" fill="none" stroke="#f0b030" stroke-width="2.6"/><path d="M15.5 1V6.5H10Z" fill="#f0b030"/><path d="M14 8Q14 14 8 14Q4 14 2 11" fill="none" stroke="#a8c0d8" stroke-width="2.6"/><path d="M0.5 15V9.5H6Z" fill="#a8c0d8"/></svg>
<div class="t" style="left:1019.40px;top:144px;font:normal 14px/14px 'Liberation Sans';color:#000;transform:scaleX(1.0987);">Synchronize</div>
<div class="t" style="left:984.00px;top:164px;font:normal 14px/14px 'Liberation Sans';color:#f4f400;transform:scaleX(1.0258);">View</div>
<svg class="a" style="left:1018px;top:171px;" width="7" height="4" viewBox="0 0 7 4"><path d="M0 0H7L3.5 4Z" fill="#000"/></svg>
<svg class="a" style="left:1143px;top:101px;" width="14" height="14" viewBox="0 0 14 14"><defs><radialGradient id="mat" cx="0.35" cy="0.3" r="0.7"><stop offset="0" stop-color="#ffd0d8"/><stop offset="0.35" stop-color="#d04860"/><stop offset="1" stop-color="#501018"/></radialGradient></defs><circle cx="7" cy="7" r="6.8" fill="url(#mat)"/></svg>
<div class="t" style="left:1160.40px;top:100px;font:normal 14px/14px 'Liberation Sans';color:#000;transform:scaleX(1.0760);">Material</div>
<svg class="a" style="left:1223px;top:100px;" width="17" height="15" viewBox="0 0 17 15"><path d="M3.5 0.5Q0.5 4 0.5 7.5Q0.5 11 3.5 14.5" fill="none" stroke="#0020e0" stroke-width="1.8"/><path d="M13.5 0.5Q16.5 4 16.5 7.5Q16.5 11 13.5 14.5" fill="none" stroke="#0020e0" stroke-width="1.8"/><path d="M5 5V3.5H6.5M10.5 3.5H12V5M12 10V11.5H10.5M6.5 11.5H5V10" fill="none" stroke="#111" stroke-width="1.3"/></svg>
<div class="t" style="left:1241.25px;top:100px;font:normal 14px/14px 'Liberation Sans';color:#000;transform:scaleX(1.0734);">Expand</div>
<svg class="a" style="left:1145px;top:127px;" width="12" height="10" viewBox="0 0 12 10"><rect x="0.7" y="0.7" width="10.6" height="8.6" fill="none" stroke="#111" stroke-width="1.3" stroke-dasharray="1.3 1.2"/></svg>
<div class="t" style="left:1160.80px;top:123px;font:normal 14px/14px 'Liberation Sans';color:#aaa6a3;transform:scaleX(1.0795);">Rotdefi</div>
<svg class="a" style="left:1224px;top:122px;" width="15" height="15" viewBox="0 0 15 15"><path d="M14.5 0.5Q9 1 5 6L3 9L6 12L9 10Q14 6 14.5 0.5Z" fill="#c8c8c8" stroke="#666" stroke-width="0.7"/><circle cx="10" cy="4.8" r="1.1" fill="#666"/><path d="M3 8L0.5 9L2 6Z M6.5 12L5.5 14.5L8.5 13Z" fill="#c02020"/><path d="M4 11L1 14.5L2.5 11" fill="#f0c020"/><path d="M4 11L8 7" stroke="#e02020" stroke-width="1.3"/></svg>
<div class="t" style="left:1241.70px;top:122px;font:normal 14px/14px 'Liberation Sans';color:#000;transform:scaleX(1.0964);">Optimize</div>
<svg class="a" style="left:1143px;top:145px;" width="15" height="15" viewBox="0 0 15 15"><g fill="none" stroke-width="1.5"><path d="M3.5 0.8L6.2 3.5L3.5 6.2L0.8 3.5Z" stroke="#c01010"/><path d="M11.5 0.8L14.2 3.5L11.5 6.2L8.8 3.5Z" stroke="#1010b0"/><path d="M3.5 8.8L6.2 11.5L3.5 14.2L0.8 11.5Z" stroke="#1010b0"/><path d="M11.5 8.8L14.2 11.5L11.5 14.2L8.8 11.5Z" stroke="#1010b0"/></g></svg>
<div class="t" style="left:1160.80px;top:145px;font:normal 14px/14px 'Liberation Sans';color:#aaa6a3;transform:scaleX(1.0976);">Lattice</div>
<svg class="a" style="left:1223px;top:146px;" width="17" height="12" viewBox="0 0 17 12"><circle cx="5.5" cy="6" r="5" fill="#ff3030" stroke="#111" stroke-width="1" stroke-dasharray="1 0.8"/><circle cx="11.5" cy="6" r="5" fill="#30e030" stroke="#111" stroke-width="1" stroke-dasharray="1 0.8"/><path d="M8.5 3L9.5 6L8.5 9" stroke="#f0f000" stroke-width="1"/></svg>
<div class="t" style="left:1240.40px;top:145px;font:normal 14px/14px 'Liberation Sans';color:#aaa6a3;transform:scaleX(0.9462);">Join</div>
<svg class="a" style="left:1310px;top:121px;" width="11" height="17" viewBox="0 0 11 17"><defs><radialGradient id="bulb2" cx="0.4" cy="0.35" r="0.6"><stop offset="0" stop-color="#fffef0"/><stop offset="0.6" stop-color="#ffe050"/><stop offset="1" stop-color="#f0b020"/></radialGradient></defs><path d="M5.5 0.8Q10.2 0.8 10.2 5.3Q10.2 8 8 10V11.5H3V10Q0.8 8 0.8 5.3Q0.8 0.8 5.5 0.8Z" fill="url(#bulb2)" stroke="#e0a020" stroke-width="0.9"/><rect x="3" y="12" width="5" height="4" fill="#aaa" stroke="#666" stroke-width="0.6"/></svg>
<div class="t" style="left:1329.20px;top:122px;font:normal 14px/14px 'Liberation Sans';color:#000;transform:scaleX(1.0976);">Transparency</div>
<svg class="a" style="left:1425px;top:128px;" width="7" height="4" viewBox="0 0 7 4"><path d="M0 0H7L3.5 4Z" fill="#000"/></svg>
<div class="t" style="left:1262.50px;top:164px;font:normal 14px/14px 'Liberation Sans';color:#f2f4f8;transform:scaleX(1.0614);">Region</div>
<div class="a" style="left:40px;top:182px;width:1880px;height:28px;background:#4a3b8a;"></div>
<div class="a" style="left:40px;top:210px;width:1880px;height:1px;background:#ffffff;"></div>
<svg class="a" style="left:54px;top:189px;" width="17" height="17" viewBox="0 0 17 17"><circle cx="8.5" cy="8.5" r="7.4" fill="none" stroke="#fff" stroke-width="1.3"/><circle cx="8.5" cy="8.5" r="3.3" fill="none" stroke="#fff" stroke-width="1.3"/></svg>
<div class="t" style="left:915.70px;top:186px;font:bold 19px/19px 'Liberation Sans';color:#ffffff;transform:scaleX(1.2449);">Geometry</div>
<svg class="a" style="left:1864px;top:190px;" width="16" height="16" viewBox="0 0 16 16"><path d="M8 0L15.5 15.5H0.5Z" fill="#fff"/></svg>
<svg class="a" style="left:1897px;top:191px;" width="13" height="12" viewBox="0 0 13 12"><path d="M1 1L12 11M12 1L1 11" stroke="#fff" stroke-width="2"/></svg>
<div class="a" style="left:40px;top:211px;width:257px;height:841px;background:#d9d9d9;"></div>
<div class="a" style="left:40px;top:211px;width:101px;height:26px;background:#d9d9d9;border-top:1px solid #fff;border-left:1px solid #fff;border-right:1px solid #9a9a9a"></div>
<div class="a" style="left:142px;top:211px;width:75px;height:26px;background:#ababab;border-top:1px solid #e8e8e8;border-left:1px solid #e8e8e8;border-right:1px solid #8a8a8a"></div>
<div class="a" style="left:218px;top:211px;width:71px;height:26px;background:#ababab;border-top:1px solid #e8e8e8;border-left:1px solid #e8e8e8;border-right:1px solid #8a8a8a"></div>
<svg class="a" style="left:46px;top:217px;" width="16" height="13" viewBox="0 0 16 13"><ellipse cx="8" cy="8" rx="7.6" ry="4" fill="#1a8a1a" stroke="#043004" stroke-width="1"/><ellipse cx="8" cy="7.4" rx="4.2" ry="1.8" fill="#0a5a0a"/><path d="M5.2 7.5L8 1L10.8 7.5Q8 9 5.2 7.5Z" fill="#d01010"/></svg>
<div class="t" style="left:62.40px;top:217px;font:normal 16px/16px 'Liberation Sans';color:#000;transform:scaleX(1.1476);">Geometr</div>
<svg class="a" style="left:147px;top:216px;" width="17" height="16" viewBox="0 0 17 16"><path d="M1 13.5H11L15.5 9V11L11 15.5H1Z" fill="#000"/><path d="M1 12.5L5.5 8H15.5L11 12.5Z" fill="#0000ff" stroke="#000" stroke-width="1.1" stroke-linejoin="round"/><path d="M1 12.5V10.5" stroke="#000" stroke-width="1.1"/><path d="M1 9.5L5.5 5H15.5L11 9.5Z" fill="#00e000" stroke="#000" stroke-width="1.1" stroke-linejoin="round"/><path d="M1 9.5V7.5" stroke="#000" stroke-width="1.1"/><path d="M1 6.5L5.5 1.5H15.5L11 6.5Z" fill="#ff0000" stroke="#000" stroke-width="1.1" stroke-linejoin="round"/><path d="M2.5 6L6 2.5H10" stroke="#ff8080" stroke-width="0.8" fill="none"/></svg>
<div class="a" style="left:164px;top:211px;width:48px;height:26px;overflow:hidden"><div class="a" style="left:-164px;top:-211px"><div class="t" style="left:164.10px;top:217px;font:normal 16px/16px 'Liberation Sans';color:#000;transform:scaleX(1.0867);">Layer:</div></div></div>
<svg class="a" style="left:223px;top:216px;" width="16" height="15" viewBox="0 0 16 15"><ellipse cx="8.5" cy="8" rx="6" ry="5" fill="#f09060" stroke="#111" stroke-width="1.2"/><path d="M2 4L0 2M2 12L0 14M15 4L16 2M15 12L16 14M5 13L4 15M12 13L13 15" stroke="#111" stroke-width="1"/><circle cx="7" cy="7" r="1" fill="#c0a030"/><circle cx="10" cy="8" r="1" fill="#c0a030"/></svg>
<div class="a" style="left:239px;top:211px;width:41px;height:26px;overflow:hidden"><div class="a" style="left:-239px;top:-211px"><div class="t" style="left:239.80px;top:217px;font:normal 16px/16px 'Liberation Sans';color:#000;transform:scaleX(1.1444);">Error</div></div></div>
<div class="a" style="left:42px;top:237px;width:247px;height:20px;background:#d9d9d9;"></div>
<div class="a" style="left:43px;top:238px;width:17px;height:18px;background:#dedede;border-top:1px solid #fff;border-left:1px solid #fff;border-bottom:1px solid #9a9a9a;border-right:1px solid #9a9a9a"></div>
<div class="a" style="left:62px;top:238px;width:18px;height:18px;background:#dedede;border-top:1px solid #fff;border-left:1px solid #fff;border-bottom:1px solid #9a9a9a;border-right:1px solid #9a9a9a"></div>
<div class="a" style="left:82px;top:238px;width:18px;height:18px;background:#dedede;border-top:1px solid #fff;border-left:1px solid #fff;border-bottom:1px solid #9a9a9a;border-right:1px solid #9a9a9a"></div>
<div class="a" style="left:103px;top:238px;width:17px;height:18px;background:#c8c8c8;border-top:1px solid #8a8a8a;border-left:1px solid #8a8a8a;border-bottom:1px solid #fff;border-right:1px solid #fff"></div>
<div class="a" style="left:123px;top:238px;width:17px;height:18px;background:#dedede;border-top:1px solid #fff;border-left:1px solid #fff;border-bottom:1px solid #9a9a9a;border-right:1px solid #9a9a9a"></div>
<div class="a" style="left:143px;top:238px;width:17px;height:18px;background:#d9d9d9;border-top:1px solid #fff;border-left:1px solid #fff;border-bottom:1px solid #9a9a9a;border-right:1px solid #9a9a9a"></div>
<svg class="a" style="left:45px;top:239px;" width="13" height="16" viewBox="0 0 13 16"><defs><linearGradient id="cone2" x1="0" x2="1"><stop offset="0" stop-color="#8a20e0"/><stop offset="0.4" stop-color="#c050ff"/><stop offset="1" stop-color="#6010b0"/></linearGradient></defs><path d="M6.5 0.5L12.5 12Q12.5 15.5 6.5 15.5Q0.5 15.5 0.5 12Z" fill="url(#cone2)" stroke="#222" stroke-width="0.6"/></svg>
<svg class="a" style="left:63px;top:240px;" width="16" height="13" viewBox="0 0 16 13"><ellipse cx="8" cy="8" rx="7.6" ry="4" fill="#1a8a1a" stroke="#043004" stroke-width="1"/><ellipse cx="8" cy="7.4" rx="4.2" ry="1.8" fill="#0a5a0a"/><path d="M5.2 7.5L8 1L10.8 7.5Q8 9 5.2 7.5Z" fill="#d01010"/></svg>
<svg class="a" style="left:84px;top:240px;" width="15" height="15" viewBox="0 0 15 15"><path d="M7.5 0.5L13.8 6.8L6.8 13.2L0.5 7.5Z" fill="#fff" stroke="#000" stroke-width="1.3" stroke-linejoin="round"/><rect x="3.4" y="5.5" width="10" height="8" fill="none" stroke="#000" stroke-width="1.1" stroke-dasharray="1 1"/></svg>
<svg class="a" style="left:104px;top:240px;" width="14" height="14" viewBox="0 0 14 14"><defs><radialGradient id="mat2" cx="0.35" cy="0.3" r="0.7"><stop offset="0" stop-color="#ffd0d8"/><stop offset="0.35" stop-color="#d04860"/><stop offset="1" stop-color="#501018"/></radialGradient></defs><circle cx="7" cy="7" r="6.8" fill="url(#mat2)"/></svg>
<svg class="a" style="left:127px;top:239px;" width="10" height="16" viewBox="0 0 10 16"><circle cx="5.5" cy="4.5" r="4" fill="#f08a50" stroke="#c05a20" stroke-width="0.6"/><path d="M3.5 8Q1 10 1.5 14" stroke="#6a8a90" stroke-width="1.4" fill="none"/></svg>
<svg class="a" style="left:146px;top:239px;" width="13" height="17" viewBox="0 0 13 17"><path d="M1 1L11 10.5H6.5L9 15.5L7 16.5L4.5 11.5L1 14.5Z" fill="#fff" stroke="#000" stroke-width="1.1" stroke-linejoin="round"/></svg>
<div class="a" style="left:42px;top:256px;width:247px;height:1px;background:#b0b0b0;"></div>
<div class="a" style="left:42px;top:258px;width:227px;height:23px;background:#fff;border-top:1px solid #9a9a9a;border-left:1px solid #9a9a9a"></div>
<div class="a" style="left:268px;top:258px;width:19px;height:23px;background:#dcdcdc;"></div>
<div class="t" style="left:44.80px;top:262px;font:normal 16px/16px 'Liberation Sans';color:#b4b4b4;transform:scaleX(1.2028);">Filter</div>
<svg class="a" style="left:272px;top:265px;" width="10" height="10" viewBox="0 0 10 10"><path d="M0.5 0.5L9.5 9.5M9.5 0.5L0.5 9.5" stroke="#f4f4f4" stroke-width="1.3"/></svg>
<div class="a" style="left:43px;top:283px;width:90px;height:24px;background:#d9d9d9;border-top:1px solid #fff;border-left:1px solid #fff;border-bottom:2px solid #8a8a8a;border-right:1px solid #8a8a8a"></div>
<div class="a" style="left:134px;top:283px;width:139px;height:24px;background:#d9d9d9;border-top:1px solid #fff;border-left:1px solid #fff;border-bottom:2px solid #8a8a8a;border-right:1px solid #8a8a8a"></div>
<div class="a" style="left:274px;top:283px;width:14px;height:24px;background:#d9d9d9;border-top:1px solid #fff;border-right:2px solid #8a8a8a;border-bottom:1px solid #8a8a8a"></div>
<div class="t" style="left:65.80px;top:288px;font:normal 16px/16px 'Liberation Sans';color:#000;transform:scaleX(1.1771);">Type</div>
<div class="t" style="left:179.50px;top:288px;font:normal 16px/16px 'Liberation Sans';color:#000;transform:scaleX(1.1023);">Name</div>
<div class="a" style="left:43px;top:307px;width:88px;height:359px;background:#fff;"></div>
<div class="a" style="left:135px;top:307px;width:136px;height:359px;background:#fff;"></div>
<div class="a" style="left:131px;top:307px;width:4px;height:359px;background:#d9d9d9;"></div>
<div class="a" style="left:271px;top:307px;width:1px;height:359px;background:#9a9a9a;"></div>
<div class="a" style="left:42px;top:307px;width:1px;height:359px;background:#d0d0d0;"></div>
<div class="t" style="left:43.60px;top:311px;font:normal 16px/16px 'Liberation Sans';color:#000;transform:scaleX(0.9676);">RPP</div>
<div class="t" style="left:135.50px;top:311px;font:normal 16px/16px 'Liberation Sans';color:#000;transform:scaleX(1.2076);">void</div>
<div class="t" style="left:43.60px;top:332px;font:normal 16px/16px 'Liberation Sans';color:#000;transform:scaleX(0.9676);">RPP</div>
<div class="t" style="left:135.50px;top:332px;font:normal 16px/16px 'Liberation Sans';color:#000;transform:scaleX(1.1731);">room</div>
<div class="t" style="left:43.60px;top:353px;font:normal 16px/16px 'Liberation Sans';color:#000;transform:scaleX(0.9676);">RPP</div>
<div class="t" style="left:135.50px;top:353px;font:normal 16px/16px 'Liberation Sans';color:#000;transform:scaleX(1.1939);">contut</div>
<div class="t" style="left:43.60px;top:374px;font:normal 16px/16px 'Liberation Sans';color:#000;transform:scaleX(0.9676);">RPP</div>
<div class="t" style="left:135.50px;top:374px;font:normal 16px/16px 'Liberation Sans';color:#000;transform:scaleX(1.1977);">contin</div>
<div class="t" style="left:43.60px;top:395px;font:normal 16px/16px 'Liberation Sans';color:#000;transform:scaleX(0.9676);">RPP</div>
<div class="t" style="left:135.50px;top:395px;font:normal 16px/16px 'Liberation Sans';color:#000;transform:scaleX(1.1183);">dos1</div>
<div class="t" style="left:43.60px;top:416px;font:normal 16px/16px 'Liberation Sans';color:#000;transform:scaleX(0.9676);">RPP</div>
<div class="t" style="left:135.50px;top:416px;font:normal 16px/16px 'Liberation Sans';color:#000;transform:scaleX(1.1183);">dos2</div>
<div class="t" style="left:43.60px;top:437px;font:normal 16px/16px 'Liberation Sans';color:#000;transform:scaleX(0.9676);">RPP</div>
<div class="t" style="left:135.50px;top:437px;font:normal 16px/16px 'Liberation Sans';color:#000;transform:scaleX(1.1183);">dos3</div>
<div class="t" style="left:43.60px;top:458px;font:normal 16px/16px 'Liberation Sans';color:#000;transform:scaleX(1.0300);">REGION</div>
<div class="t" style="left:135.50px;top:458px;font:normal 16px/16px 'Liberation Sans';color:#000;transform:scaleX(1.1036);">regBKH</div>
<div class="a" style="left:43px;top:476px;width:88px;height:21px;background:#c3c3c3;"></div>
<div class="a" style="left:135px;top:476px;width:136px;height:21px;background:#c3c3c3;"></div>
<div class="t" style="left:43.60px;top:479px;font:normal 16px/16px 'Liberation Sans';color:#000;transform:scaleX(1.0300);">REGION</div>
<div class="t" style="left:135.50px;top:479px;font:normal 16px/16px 'Liberation Sans';color:#000;transform:scaleX(1.0862);">regVAC</div>
<div class="t" style="left:43.60px;top:500px;font:normal 16px/16px 'Liberation Sans';color:#000;transform:scaleX(1.0300);">REGION</div>
<div class="t" style="left:135.50px;top:500px;font:normal 16px/16px 'Liberation Sans';color:#000;transform:scaleX(1.0723);">regROOM</div>
<div class="t" style="left:43.60px;top:521px;font:normal 16px/16px 'Liberation Sans';color:#000;transform:scaleX(1.0300);">REGION</div>
<div class="t" style="left:135.50px;top:521px;font:normal 16px/16px 'Liberation Sans';color:#000;transform:scaleX(1.0880);">regPMMA</div>
<div class="t" style="left:43.60px;top:542px;font:normal 16px/16px 'Liberation Sans';color:#000;transform:scaleX(1.0300);">REGION</div>
<div class="t" style="left:135.50px;top:542px;font:normal 16px/16px 'Liberation Sans';color:#000;transform:scaleX(1.0691);">regWATER</div>
<div class="t" style="left:43.60px;top:563px;font:normal 16px/16px 'Liberation Sans';color:#000;transform:scaleX(1.0300);">REGION</div>
<div class="t" style="left:135.50px;top:563px;font:normal 16px/16px 'Liberation Sans';color:#000;transform:scaleX(1.1131);">regTLD1</div>
<div class="t" style="left:43.60px;top:584px;font:normal 16px/16px 'Liberation Sans';color:#000;transform:scaleX(1.0300);">REGION</div>
<div class="t" style="left:135.50px;top:584px;font:normal 16px/16px 'Liberation Sans';color:#000;transform:scaleX(1.1131);">regTLD2</div>
<div class="t" style="left:43.60px;top:605px;font:normal 16px/16px 'Liberation Sans';color:#000;transform:scaleX(1.0300);">REGION</div>
<div class="t" style="left:135.50px;top:605px;font:normal 16px/16px 'Liberation Sans';color:#000;transform:scaleX(1.1131);">regTLD3</div>
<div class="t" style="left:43.60px;top:626px;font:normal 16px/16px 'Liberation Sans';color:#000;transform:scaleX(1.0163);">ROT-DEFI</div>
<div class="t" style="left:135.50px;top:626px;font:normal 16px/16px 'Liberation Sans';color:#000;transform:scaleX(1.2970);">60+</div>
<div class="t" style="left:43.60px;top:647px;font:normal 16px/16px 'Liberation Sans';color:#000;transform:scaleX(1.0529);">BEAM</div>
<div class="t" style="left:135.50px;top:647px;font:normal 16px/16px 'Liberation Sans';color:#000;transform:scaleX(1.0451);">PHOTON</div>
<div class="a" style="left:273px;top:307px;width:15px;height:359px;background:#d9d9d9;border-left:1px solid #8a8a8a;border-right:1px solid #8a8a8a"></div>
<div class="a" style="left:274px;top:307px;width:1px;height:359px;background:#fff;"></div>
<div class="a" style="left:275px;top:308px;width:12px;height:9px;background:#dcdcdc;border-right:1px solid #8a8a8a;border-bottom:1px solid #8a8a8a"></div>
<svg class="a" style="left:277px;top:310px;" width="8" height="5" viewBox="0 0 8 5"><path d="M4 0L8 5H0Z" fill="#000"/></svg>
<div class="a" style="left:275px;top:317px;width:12px;height:18px;background:#c4c4c4;"></div>
<div class="a" style="left:275px;top:335px;width:12px;height:1px;background:#fff;"></div>
<div class="a" style="left:286px;top:336px;width:1px;height:319px;background:#8a8a8a;"></div>
<div class="a" style="left:275px;top:655px;width:12px;height:10px;background:#dcdcdc;border-right:1px solid #8a8a8a;border-bottom:1px solid #8a8a8a;border-top:1px solid #fff"></div>
<svg class="a" style="left:277px;top:658px;" width="8" height="5" viewBox="0 0 8 5"><path d="M0 0H8L4 5Z" fill="#000"/></svg>
<div class="a" style="left:42px;top:667px;width:246px;height:6px;background:#dedede;border:1px solid #8a8a8a;border-top-color:#fff;border-left-color:#fff"></div>
<div class="a" style="left:42px;top:674px;width:117px;height:25px;background:#d9d9d9;border-top:1px solid #fff;border-left:1px solid #fff;border-right:1px solid #8a8a8a"></div>
<div class="a" style="left:160px;top:674px;width:116px;height:23px;background:#ababab;border-top:1px solid #e8e8e8;border-left:1px solid #e8e8e8;border-right:1px solid #8a8a8a"></div>
<svg class="a" style="left:47px;top:676px;" width="17" height="15" viewBox="0 0 17 15"><rect x="0.5" y="4.5" width="12" height="10" fill="#eef4fa" stroke="#5a7ab0" stroke-width="1"/><path d="M2.5 8H10M2.5 10.5H10M2.5 13H10" stroke="#5a7ab0" stroke-width="0.8"/><path d="M6 6L13 1L16 3L10 8Z" fill="#f0c040" stroke="#806020" stroke-width="0.6"/><path d="M13 1L16.5 0.5L16 3Z" fill="#30a030"/></svg>
<div class="t" style="left:68.00px;top:677px;font:normal 16px/16px 'Liberation Sans';color:#000;transform:scaleX(1.1534);">Properties</div>
<svg class="a" style="left:165px;top:675px;" width="16" height="16" viewBox="0 0 16 16"><rect x="0.5" y="0.5" width="6" height="4" fill="#f0a060" stroke="#a06030" stroke-width="0.6"/><rect x="8.5" y="0.5" width="6" height="4" fill="#f0a060" stroke="#a06030" stroke-width="0.6"/><g fill="#eef" stroke="#8aa" stroke-width="0.6"><rect x="0.5" y="5.5" width="6" height="4"/><rect x="8.5" y="5.5" width="6" height="4"/><rect x="8.5" y="10.5" width="6" height="4"/></g><path d="M3.5 9V15M0.5 12H6.5" stroke="#30b030" stroke-width="2"/></svg>
<div class="t" style="left:185.50px;top:677px;font:normal 16px/16px 'Liberation Sans';color:#000;transform:scaleX(1.2250);">Attributes</div>
<div class="a" style="left:44px;top:699px;width:99px;height:353px;background:#fff;"></div>
<div class="a" style="left:147px;top:699px;width:124px;height:353px;background:#fff;"></div>
<div class="a" style="left:143px;top:699px;width:4px;height:353px;background:#d9d9d9;"></div>
<div class="a" style="left:271px;top:699px;width:1px;height:353px;background:#9a9a9a;"></div>
<div class="t" style="left:44.70px;top:703px;font:normal 16px/16px 'Liberation Sans';color:#000;transform:scaleX(1.1588);">name</div>
<div class="a" style="left:147px;top:700px;width:124px;height:21px;overflow:hidden"><div class="a" style="left:-147px;top:-700px"><div class="t" style="left:148.00px;top:703px;font:normal 16px/16px 'Liberation Sans';color:#000;transform:scaleX(1.0862);">regVAC</div></div></div>
<div class="t" style="left:44.70px;top:724px;font:normal 16px/16px 'Liberation Sans';color:#000;transform:scaleX(1.1861);">comment</div>
<div class="a" style="left:147px;top:721px;width:124px;height:21px;overflow:hidden"><div class="a" style="left:-147px;top:-721px"><div class="t" style="left:148.00px;top:724px;font:normal 16px/16px 'Liberation Sans';color:#000;transform:scaleX(1.1705);">vacuum around</div></div></div>
<div class="t" style="left:44.70px;top:745px;font:normal 16px/16px 'Liberation Sans';color:#000;transform:scaleX(1.2107);">material</div>
<div class="a" style="left:147px;top:742px;width:124px;height:21px;overflow:hidden"><div class="a" style="left:-147px;top:-742px"><div class="t" style="left:148.00px;top:745px;font:normal 16px/16px 'Liberation Sans';color:#000;transform:scaleX(1.0451);">VACUUM</div></div></div>
<div class="t" style="left:44.70px;top:766px;font:normal 16px/16px 'Liberation Sans';color:#000;transform:scaleX(1.1466);">zone01</div>
<div class="a" style="left:147px;top:763px;width:124px;height:21px;overflow:hidden"><div class="a" style="left:-147px;top:-763px"><div class="t" style="left:148.00px;top:766px;font:normal 16px/16px 'Liberation Sans';color:#000;transform:scaleX(1.2118);">+void -room</div></div></div>
<div class="t" style="left:44.70px;top:787px;font:normal 16px/16px 'Liberation Sans';color:#a00000;transform:scaleX(1.2173);">+zone</div>
<div class="a" style="left:273px;top:699px;width:15px;height:353px;background:#d9d9d9;border-left:1px solid #8a8a8a;border-right:1px solid #8a8a8a"></div>
<div class="a" style="left:274px;top:699px;width:1px;height:353px;background:#fff;"></div>
<div class="a" style="left:275px;top:701px;width:12px;height:11px;background:#dcdcdc;border-top:1px solid #fff;border-left:1px solid #fff;border-right:1px solid #aaa;border-bottom:1px solid #aaa"></div>
<svg class="a" style="left:277px;top:704px;" width="8" height="5" viewBox="0 0 8 5"><path d="M4 0L8 5H0Z" fill="#c0c0c0"/></svg>
<div class="a" style="left:275px;top:1040px;width:12px;height:11px;background:#dcdcdc;border-top:1px solid #fff;border-left:1px solid #fff;border-right:1px solid #aaa;border-bottom:1px solid #aaa"></div>
<svg class="a" style="left:277px;top:1043px;" width="8" height="5" viewBox="0 0 8 5"><path d="M0 0H8L4 5Z" fill="#c0c0c0"/></svg>
<div class="a" style="left:288px;top:232px;width:1px;height:820px;background:#8a8a8a;"></div>
<div class="a" style="left:290px;top:232px;width:1px;height:820px;background:#8a8a8a;"></div>
<div class="a" style="left:291px;top:232px;width:1px;height:820px;background:#ffffff;"></div>
<div class="a" style="left:296px;top:232px;width:1px;height:820px;background:#8a8a8a;"></div>
<div class="a" style="left:297px;top:214px;width:1px;height:838px;background:#ffffff;"></div>
<div class="a" style="left:280px;top:214px;width:17px;height:18px;background:#dcdcdc;"></div>
<svg class="a" style="left:285px;top:221px;" width="9" height="8" viewBox="0 0 9 8"><path d="M0 4L9 0V8Z" fill="#000"/></svg>
<div class="a" style="left:297px;top:211px;width:1623px;height:28px;background:#d9d9d9;"></div>
<div class="a" style="left:297px;top:238px;width:1623px;height:1px;background:#8a8a8a;"></div>
<div class="a" style="left:297px;top:237px;width:1623px;height:1px;background:#cfcfcf;"></div>
<div class="a" style="left:302px;top:213px;width:37px;height:24px;background:#d9d9d9;border-top:1px solid #fff;border-left:1px solid #fff;border-bottom:1px solid #888;border-right:1px solid #888"></div>
<svg class="a" style="left:303px;top:217px;" width="17" height="17" viewBox="0 0 17 17"><defs><radialGradient id="glob" cx="0.4" cy="0.4" r="0.6"><stop offset="0" stop-color="#a0e0a0"/><stop offset="0.5" stop-color="#3a90d0"/><stop offset="1" stop-color="#2050a0"/></radialGradient></defs><circle cx="8.5" cy="8.5" r="4.5" fill="url(#glob)"/><path d="M8.5 0L11 3H6ZM8.5 17L11 14H6ZM0 8.5L3 6V11ZM17 8.5L14 6V11Z" fill="#000"/></svg>
<svg class="a" style="left:324px;top:220px;" width="13" height="13" viewBox="0 0 13 13"><path d="M0 0H13L6.5 13Z" fill="#000"/></svg>
<div class="a" style="left:341px;top:213px;width:20px;height:23px;background:#d9d9d9;border-top:1px solid #fff;border-left:1px solid #fff;border-bottom:1px solid #888;border-right:1px solid #888"></div>
<svg class="a" style="left:346px;top:219px;" width="11" height="11" viewBox="0 0 11 11"><path d="M0 5.5L5.5 0V3H10.5V8H5.5V11Z" fill="#80c060" stroke="#4a8a3a" stroke-width="0.8"/></svg>
<div class="a" style="left:364px;top:213px;width:19px;height:23px;background:#d9d9d9;border-top:1px solid #fff;border-left:1px solid #fff;border-bottom:1px solid #888;border-right:1px solid #888"></div>
<svg class="a" style="left:368px;top:219px;" width="11" height="11" viewBox="0 0 11 11"><path d="M11 5.5L5.5 0V3H0.5V8H5.5V11Z" fill="#c8e0b8" stroke="#a0c090" stroke-width="0.8" stroke-dasharray="1 0.6"/></svg>
<div class="a" style="left:385px;top:213px;width:20px;height:23px;background:#d9d9d9;border-top:1px solid #fff;border-left:1px solid #fff;border-bottom:1px solid #888;border-right:1px solid #888"></div>
<svg class="a" style="left:388px;top:217px;" width="16" height="16" viewBox="0 0 16 16"><path d="M11.8 4.2A5.6 5.6 0 1 0 12.6 10.4" fill="none" stroke="#b0b0b0" stroke-width="4.4"/><path d="M11.8 4.2A5.6 5.6 0 1 0 12.6 10.4" fill="none" stroke="#ececec" stroke-width="2.2"/><path d="M8.8 6.4L14.6 6.4V0.8Z" fill="#ececec" stroke="#b0b0b0" stroke-width="1.2" stroke-linejoin="round"/></svg>
<div class="a" style="left:411px;top:217px;width:1px;height:16px;background:#a0a0a0;"></div>
<div class="a" style="left:417px;top:213px;width:20px;height:23px;background:#d9d9d9;border-top:1px solid #fff;border-left:1px solid #fff;border-bottom:1px solid #888;border-right:1px solid #888"></div>
<svg class="a" style="left:419px;top:217px;" width="17" height="16" viewBox="0 0 17 16"><path d="M1 13.5H11L15.5 9V11L11 15.5H1Z" fill="#000"/><path d="M1 12.5L5.5 8H15.5L11 12.5Z" fill="#0000ff" stroke="#000" stroke-width="1.1" stroke-linejoin="round"/><path d="M1 12.5V10.5" stroke="#000" stroke-width="1.1"/><path d="M1 9.5L5.5 5H15.5L11 9.5Z" fill="#00e000" stroke="#000" stroke-width="1.1" stroke-linejoin="round"/><path d="M1 9.5V7.5" stroke="#000" stroke-width="1.1"/><path d="M1 6.5L5.5 1.5H15.5L11 6.5Z" fill="#ff0000" stroke="#000" stroke-width="1.1" stroke-linejoin="round"/><path d="M2.5 6L6 2.5H10" stroke="#ff8080" stroke-width="0.8" fill="none"/></svg>
<div class="a" style="left:439px;top:213px;width:692px;height:24px;background:#d9d9d9;border-top:1px solid #fff;border-left:1px solid #fff;border-bottom:1px solid #888;border-right:1px solid #888"></div>
<div class="t" style="left:442.00px;top:218px;font:normal 16px/16px 'Liberation Sans';color:#000;transform:scaleX(1.0909);">Media</div>
<div class="a" style="left:1132px;top:214px;width:18px;height:22px;background:#d9d9d9;border-top:1px solid #fff;border-left:1px solid #fff;border-bottom:1px solid #888;border-right:1px solid #888"></div>
<svg class="a" style="left:1134px;top:220px;" width="13" height="13" viewBox="0 0 13 13"><path d="M0 0H13L6.5 13Z" fill="#000"/></svg>
<div class="a" style="left:1153px;top:215px;width:20px;height:20px;background:#d9d9d9;border-top:1px solid #fff;border-left:1px solid #fff;border-bottom:1px solid #888;border-right:1px solid #888"></div>
<svg class="a" style="left:1156px;top:219px;" width="14" height="13" viewBox="0 0 14 13"><path d="M7 0L8.7 4.7H13.7L9.7 7.7L11.2 12.7L7 9.7L2.8 12.7L4.3 7.7L0.3 4.7H5.3Z" fill="#000"/></svg>
<div class="a" style="left:1175px;top:213px;width:681px;height:25px;background:#fff;border-top:1px solid #888;border-left:1px solid #888;border-bottom:1px solid #e8e8e8;border-right:1px solid #e8e8e8"></div>
<div class="t" style="left:1177.80px;top:218px;font:normal 16px/16px 'Liberation Sans';color:#000;transform:scaleX(1.0552);">Red</div>
<div class="a" style="left:1857px;top:213px;width:19px;height:24px;background:#d9d9d9;border-top:1px solid #fff;border-left:1px solid #fff;border-bottom:1px solid #888;border-right:1px solid #888"></div>
<svg class="a" style="left:1860px;top:220px;" width="13" height="13" viewBox="0 0 13 13"><path d="M0 0H13L6.5 13Z" fill="#000"/></svg>
<div class="a" style="left:1878px;top:213px;width:20px;height:24px;background:#d9d9d9;border-top:1px solid #fff;border-left:1px solid #fff;border-bottom:1px solid #888;border-right:1px solid #888"></div>
<svg class="a" style="left:1883px;top:221px;" width="10" height="9" viewBox="0 0 10 9"><path d="M0.5 0.5L9.5 8.5M9.5 0.5L0.5 8.5" stroke="#000" stroke-width="1.3"/></svg>
<div class="a" style="left:1899px;top:214px;width:19px;height:22px;background:#ff7272;border-top:1px solid #a03030;border-left:1px solid #a03030"></div>
<svg class="a" style="left:1902px;top:220px;" width="13" height="13" viewBox="0 0 13 13"><path d="M0 0H13L6.5 13Z" fill="#000"/></svg>
<div class="a" style="left:1918px;top:211px;width:2px;height:841px;background:#8a8a8a;"></div>
<svg class="a" style="left:297px;top:239px;shape-rendering:crispEdges" width="1621" height="813" viewBox="0 0 1621 813"><defs><pattern id="dots" width="4" height="4" patternUnits="userSpaceOnUse"><rect width="4" height="4" fill="#fff"/><rect x="1" y="1" width="1" height="1" fill="#000"/><rect x="3" y="3" width="1" height="1" fill="#000"/></pattern></defs><rect width="1621" height="813" fill="url(#dots)"/><rect x="386" y="1" width="226" height="813" fill="#dff2fd"/><rect x="385" y="1" width="1" height="813" fill="#000"/><rect x="612" y="1" width="1" height="813" fill="#000"/><line x1="386" y1="174.5" x2="612" y2="174.5" stroke="#a8b8c0" stroke-width="1" stroke-dasharray="1 3"/><line x1="386" y1="400.5" x2="612" y2="400.5" stroke="#a8b8c0" stroke-width="1" stroke-dasharray="1 3"/><line x1="498.5" y1="1" x2="498.5" y2="813" stroke="#ff50ff" stroke-width="1" stroke-dasharray="5 5" stroke-dashoffset="-1"/><line x1="498.5" y1="1" x2="498.5" y2="813" stroke="#909090" stroke-width="1" stroke-dasharray="1 9" stroke-dashoffset="-8"/><line x1="1" y1="626.5" x2="1621" y2="626.5" stroke="#6a6aff" stroke-width="1.2" stroke-dasharray="5 5"/><line x1="1" y1="626.5" x2="1621" y2="626.5" stroke="#909090" stroke-width="1" stroke-dasharray="1 9" stroke-dashoffset="-7"/><circle cx="498.5" cy="626.5" r="39.3" fill="none" stroke="#3cf03c" stroke-width="2"/><polygon points="507.83,630.37 502.37,635.83 494.63,635.83 489.17,630.37 489.17,622.63 494.63,617.17 502.37,617.17 507.83,622.63" fill="none" stroke="#1a0808" stroke-width="2"/><rect x="497" y="586" width="2" height="41" fill="#ff0000"/><rect x="499" y="625" width="39" height="2" fill="#0000ff"/><rect x="496.5" y="445.5" width="4" height="4" fill="none" stroke="#ff50ff" stroke-width="1"/><rect x="501" y="447" width="12" height="1" fill="#ff50ff"/><rect x="289.5" y="624.5" width="4" height="4" fill="none" stroke="#6a6aff" stroke-width="1"/><rect x="291" y="629" width="1" height="12" fill="#6a6aff"/><polygon points="1001.3,297.5 971.3,314.8 1005.5,373.5 1035.4,356.3" fill="#fff" stroke="#ff1010" stroke-width="1.3"/><polygon points="1001.3,300.0 972.3,315.5 1005.5,372.0 1032.5,355.0" fill="#0a86c8"/><line x1="1455" y1="3" x2="916" y2="810" stroke="#50ea50" stroke-width="1" stroke-dasharray="4.5 4.5" shape-rendering="geometricPrecision"/><rect x="913.5" y="809.5" width="5" height="4" fill="none" stroke="#40e840" stroke-width="1"/><rect x="25.5" y="759.5" width="32" height="32" fill="#ece6e0" stroke="#808080" stroke-width="1"/><rect x="24" y="747" width="2" height="45" fill="#ff0000"/><rect x="25" y="790" width="44" height="3" fill="#0000ff"/><path d="M25 737L30 743M30 737L25 743" stroke="#ff2020" stroke-width="1"/><path d="M73 785.5H78L73 790H78" stroke="#0000ff" stroke-width="1.2" fill="none"/><path d="M25.5 785V789H29.5V785M27.5 789V792" stroke="#20e020" stroke-width="1" fill="none"/><path d="M39.5 771V779Q39.5 780.5 41.5 780.5Q43.5 780.5 43.5 779V771" stroke="#222" stroke-width="1" fill="none"/><rect x="0" y="0" width="1621" height="1" fill="#7c7a79"/></svg>
<svg class="a" style="left:299px;top:243px;" width="9" height="10" viewBox="0 0 9 10"><path d="M1 1L7 8M7 1L1 8" stroke="#000" stroke-width="0.9" transform="translate(1 1)"/><path d="M1 1L7 8M7 1L1 8" stroke="#ff1010" stroke-width="0.9"/></svg>
<div class="t" style="left:1064.75px;top:247px;font:normal 12px/12px 'Liberation Mono';color:#000;transform:scaleX(1.0494);-webkit-text-stroke:0;">Errors Found</div>
<div class="t" style="left:1063.75px;top:246px;font:normal 12px/12px 'Liberation Mono';color:#ee0000;transform:scaleX(1.0494);-webkit-text-stroke:0;">Errors Found</div>
<div class="t" style="left:771.20px;top:754px;font:normal 13px/13px 'Liberation Mono';color:#a05218;transform:scaleX(0.9800);-webkit-text-stroke:0;">regROOM</div>
<svg class="a" style="left:300px;top:403px;shape-rendering:crispEdges" width="24" height="10" viewBox="0 0 24 10"><path d="M2 1h1v1h-1zM3 1h1v1h-1zM4 1h1v1h-1zM1 2h1v1h-1zM5 2h1v1h-1zM5 3h1v1h-1zM5 4h1v1h-1zM4 5h1v1h-1zM3 6h1v1h-1zM2 7h1v1h-1zM1 8h1v1h-1zM1 9h1v1h-1zM2 9h1v1h-1zM3 9h1v1h-1zM4 9h1v1h-1zM5 9h1v1h-1zM10 1h1v1h-1zM11 1h1v1h-1zM12 1h1v1h-1zM9 2h1v1h-1zM13 2h1v1h-1zM9 3h1v1h-1zM13 3h1v1h-1zM9 4h1v1h-1zM12 4h1v1h-1zM13 4h1v1h-1zM9 5h1v1h-1zM11 5h1v1h-1zM13 5h1v1h-1zM9 6h1v1h-1zM10 6h1v1h-1zM13 6h1v1h-1zM9 7h1v1h-1zM13 7h1v1h-1zM9 8h1v1h-1zM13 8h1v1h-1zM10 9h1v1h-1zM11 9h1v1h-1zM12 9h1v1h-1zM18 1h1v1h-1zM19 1h1v1h-1zM20 1h1v1h-1zM17 2h1v1h-1zM21 2h1v1h-1zM17 3h1v1h-1zM21 3h1v1h-1zM17 4h1v1h-1zM20 4h1v1h-1zM21 4h1v1h-1zM17 5h1v1h-1zM19 5h1v1h-1zM21 5h1v1h-1zM17 6h1v1h-1zM18 6h1v1h-1zM21 6h1v1h-1zM17 7h1v1h-1zM21 7h1v1h-1zM17 8h1v1h-1zM21 8h1v1h-1zM18 9h1v1h-1zM19 9h1v1h-1zM20 9h1v1h-1z" fill="#000"/><path d="M1 0h1v1h-1zM2 0h1v1h-1zM3 0h1v1h-1zM0 1h1v1h-1zM4 1h1v1h-1zM4 2h1v1h-1zM4 3h1v1h-1zM3 4h1v1h-1zM2 5h1v1h-1zM1 6h1v1h-1zM0 7h1v1h-1zM0 8h1v1h-1zM1 8h1v1h-1zM2 8h1v1h-1zM3 8h1v1h-1zM4 8h1v1h-1zM9 0h1v1h-1zM10 0h1v1h-1zM11 0h1v1h-1zM8 1h1v1h-1zM12 1h1v1h-1zM8 2h1v1h-1zM12 2h1v1h-1zM8 3h1v1h-1zM11 3h1v1h-1zM12 3h1v1h-1zM8 4h1v1h-1zM10 4h1v1h-1zM12 4h1v1h-1zM8 5h1v1h-1zM9 5h1v1h-1zM12 5h1v1h-1zM8 6h1v1h-1zM12 6h1v1h-1zM8 7h1v1h-1zM12 7h1v1h-1zM9 8h1v1h-1zM10 8h1v1h-1zM11 8h1v1h-1zM17 0h1v1h-1zM18 0h1v1h-1zM19 0h1v1h-1zM16 1h1v1h-1zM20 1h1v1h-1zM16 2h1v1h-1zM20 2h1v1h-1zM16 3h1v1h-1zM19 3h1v1h-1zM20 3h1v1h-1zM16 4h1v1h-1zM18 4h1v1h-1zM20 4h1v1h-1zM16 5h1v1h-1zM17 5h1v1h-1zM20 5h1v1h-1zM16 6h1v1h-1zM20 6h1v1h-1zM16 7h1v1h-1zM20 7h1v1h-1zM17 8h1v1h-1zM18 8h1v1h-1zM19 8h1v1h-1z" fill="#fff2b8"/></svg>
<svg class="a" style="left:300px;top:629px;shape-rendering:crispEdges" width="24" height="10" viewBox="0 0 24 10"><path d="M3 1h1v1h-1zM2 2h1v1h-1zM3 2h1v1h-1zM1 3h1v1h-1zM3 3h1v1h-1zM3 4h1v1h-1zM3 5h1v1h-1zM3 6h1v1h-1zM3 7h1v1h-1zM3 8h1v1h-1zM1 9h1v1h-1zM2 9h1v1h-1zM3 9h1v1h-1zM4 9h1v1h-1zM5 9h1v1h-1zM10 1h1v1h-1zM11 1h1v1h-1zM12 1h1v1h-1zM9 2h1v1h-1zM13 2h1v1h-1zM9 3h1v1h-1zM13 3h1v1h-1zM9 4h1v1h-1zM12 4h1v1h-1zM13 4h1v1h-1zM9 5h1v1h-1zM11 5h1v1h-1zM13 5h1v1h-1zM9 6h1v1h-1zM10 6h1v1h-1zM13 6h1v1h-1zM9 7h1v1h-1zM13 7h1v1h-1zM9 8h1v1h-1zM13 8h1v1h-1zM10 9h1v1h-1zM11 9h1v1h-1zM12 9h1v1h-1zM18 1h1v1h-1zM19 1h1v1h-1zM20 1h1v1h-1zM17 2h1v1h-1zM21 2h1v1h-1zM17 3h1v1h-1zM21 3h1v1h-1zM17 4h1v1h-1zM20 4h1v1h-1zM21 4h1v1h-1zM17 5h1v1h-1zM19 5h1v1h-1zM21 5h1v1h-1zM17 6h1v1h-1zM18 6h1v1h-1zM21 6h1v1h-1zM17 7h1v1h-1zM21 7h1v1h-1zM17 8h1v1h-1zM21 8h1v1h-1zM18 9h1v1h-1zM19 9h1v1h-1zM20 9h1v1h-1z" fill="#000"/><path d="M2 0h1v1h-1zM1 1h1v1h-1zM2 1h1v1h-1zM0 2h1v1h-1zM2 2h1v1h-1zM2 3h1v1h-1zM2 4h1v1h-1zM2 5h1v1h-1zM2 6h1v1h-1zM2 7h1v1h-1zM0 8h1v1h-1zM1 8h1v1h-1zM2 8h1v1h-1zM3 8h1v1h-1zM4 8h1v1h-1zM9 0h1v1h-1zM10 0h1v1h-1zM11 0h1v1h-1zM8 1h1v1h-1zM12 1h1v1h-1zM8 2h1v1h-1zM12 2h1v1h-1zM8 3h1v1h-1zM11 3h1v1h-1zM12 3h1v1h-1zM8 4h1v1h-1zM10 4h1v1h-1zM12 4h1v1h-1zM8 5h1v1h-1zM9 5h1v1h-1zM12 5h1v1h-1zM8 6h1v1h-1zM12 6h1v1h-1zM8 7h1v1h-1zM12 7h1v1h-1zM9 8h1v1h-1zM10 8h1v1h-1zM11 8h1v1h-1zM17 0h1v1h-1zM18 0h1v1h-1zM19 0h1v1h-1zM16 1h1v1h-1zM20 1h1v1h-1zM16 2h1v1h-1zM20 2h1v1h-1zM16 3h1v1h-1zM19 3h1v1h-1zM20 3h1v1h-1zM16 4h1v1h-1zM18 4h1v1h-1zM20 4h1v1h-1zM16 5h1v1h-1zM17 5h1v1h-1zM20 5h1v1h-1zM16 6h1v1h-1zM20 6h1v1h-1zM16 7h1v1h-1zM20 7h1v1h-1zM17 8h1v1h-1zM18 8h1v1h-1zM19 8h1v1h-1z" fill="#fff2b8"/></svg>
<svg class="a" style="left:300px;top:855px;shape-rendering:crispEdges" width="8" height="10" viewBox="0 0 8 10"><path d="M2 1h1v1h-1zM3 1h1v1h-1zM4 1h1v1h-1zM1 2h1v1h-1zM5 2h1v1h-1zM1 3h1v1h-1zM5 3h1v1h-1zM1 4h1v1h-1zM4 4h1v1h-1zM5 4h1v1h-1zM1 5h1v1h-1zM3 5h1v1h-1zM5 5h1v1h-1zM1 6h1v1h-1zM2 6h1v1h-1zM5 6h1v1h-1zM1 7h1v1h-1zM5 7h1v1h-1zM1 8h1v1h-1zM5 8h1v1h-1zM2 9h1v1h-1zM3 9h1v1h-1zM4 9h1v1h-1z" fill="#000"/><path d="M1 0h1v1h-1zM2 0h1v1h-1zM3 0h1v1h-1zM0 1h1v1h-1zM4 1h1v1h-1zM0 2h1v1h-1zM4 2h1v1h-1zM0 3h1v1h-1zM3 3h1v1h-1zM4 3h1v1h-1zM0 4h1v1h-1zM2 4h1v1h-1zM4 4h1v1h-1zM0 5h1v1h-1zM1 5h1v1h-1zM4 5h1v1h-1zM0 6h1v1h-1zM4 6h1v1h-1zM0 7h1v1h-1zM4 7h1v1h-1zM1 8h1v1h-1zM2 8h1v1h-1zM3 8h1v1h-1z" fill="#fff2b8"/></svg>
<svg class="a" style="left:345px;top:1042px;shape-rendering:crispEdges" width="32" height="10" viewBox="0 0 32 10"><path d="M1 5h1v1h-1zM2 5h1v1h-1zM3 5h1v1h-1zM4 5h1v1h-1zM5 5h1v1h-1zM10 1h1v1h-1zM11 1h1v1h-1zM12 1h1v1h-1zM9 2h1v1h-1zM13 2h1v1h-1zM13 3h1v1h-1zM13 4h1v1h-1zM12 5h1v1h-1zM11 6h1v1h-1zM10 7h1v1h-1zM9 8h1v1h-1zM9 9h1v1h-1zM10 9h1v1h-1zM11 9h1v1h-1zM12 9h1v1h-1zM13 9h1v1h-1zM18 1h1v1h-1zM19 1h1v1h-1zM20 1h1v1h-1zM17 2h1v1h-1zM21 2h1v1h-1zM17 3h1v1h-1zM21 3h1v1h-1zM17 4h1v1h-1zM20 4h1v1h-1zM21 4h1v1h-1zM17 5h1v1h-1zM19 5h1v1h-1zM21 5h1v1h-1zM17 6h1v1h-1zM18 6h1v1h-1zM21 6h1v1h-1zM17 7h1v1h-1zM21 7h1v1h-1zM17 8h1v1h-1zM21 8h1v1h-1zM18 9h1v1h-1zM19 9h1v1h-1zM20 9h1v1h-1zM26 1h1v1h-1zM27 1h1v1h-1zM28 1h1v1h-1zM25 2h1v1h-1zM29 2h1v1h-1zM25 3h1v1h-1zM29 3h1v1h-1zM25 4h1v1h-1zM28 4h1v1h-1zM29 4h1v1h-1zM25 5h1v1h-1zM27 5h1v1h-1zM29 5h1v1h-1zM25 6h1v1h-1zM26 6h1v1h-1zM29 6h1v1h-1zM25 7h1v1h-1zM29 7h1v1h-1zM25 8h1v1h-1zM29 8h1v1h-1zM26 9h1v1h-1zM27 9h1v1h-1zM28 9h1v1h-1z" fill="#000"/><path d="M0 4h1v1h-1zM1 4h1v1h-1zM2 4h1v1h-1zM3 4h1v1h-1zM4 4h1v1h-1zM9 0h1v1h-1zM10 0h1v1h-1zM11 0h1v1h-1zM8 1h1v1h-1zM12 1h1v1h-1zM12 2h1v1h-1zM12 3h1v1h-1zM11 4h1v1h-1zM10 5h1v1h-1zM9 6h1v1h-1zM8 7h1v1h-1zM8 8h1v1h-1zM9 8h1v1h-1zM10 8h1v1h-1zM11 8h1v1h-1zM12 8h1v1h-1zM17 0h1v1h-1zM18 0h1v1h-1zM19 0h1v1h-1zM16 1h1v1h-1zM20 1h1v1h-1zM16 2h1v1h-1zM20 2h1v1h-1zM16 3h1v1h-1zM19 3h1v1h-1zM20 3h1v1h-1zM16 4h1v1h-1zM18 4h1v1h-1zM20 4h1v1h-1zM16 5h1v1h-1zM17 5h1v1h-1zM20 5h1v1h-1zM16 6h1v1h-1zM20 6h1v1h-1zM16 7h1v1h-1zM20 7h1v1h-1zM17 8h1v1h-1zM18 8h1v1h-1zM19 8h1v1h-1zM25 0h1v1h-1zM26 0h1v1h-1zM27 0h1v1h-1zM24 1h1v1h-1zM28 1h1v1h-1zM24 2h1v1h-1zM28 2h1v1h-1zM24 3h1v1h-1zM27 3h1v1h-1zM28 3h1v1h-1zM24 4h1v1h-1zM26 4h1v1h-1zM28 4h1v1h-1zM24 5h1v1h-1zM25 5h1v1h-1zM28 5h1v1h-1zM24 6h1v1h-1zM28 6h1v1h-1zM24 7h1v1h-1zM28 7h1v1h-1zM25 8h1v1h-1zM26 8h1v1h-1zM27 8h1v1h-1z" fill="#fff2b8"/></svg>
<svg class="a" style="left:571px;top:1042px;shape-rendering:crispEdges" width="32" height="10" viewBox="0 0 32 10"><path d="M1 5h1v1h-1zM2 5h1v1h-1zM3 5h1v1h-1zM4 5h1v1h-1zM5 5h1v1h-1zM11 1h1v1h-1zM10 2h1v1h-1zM11 2h1v1h-1zM9 3h1v1h-1zM11 3h1v1h-1zM11 4h1v1h-1zM11 5h1v1h-1zM11 6h1v1h-1zM11 7h1v1h-1zM11 8h1v1h-1zM9 9h1v1h-1zM10 9h1v1h-1zM11 9h1v1h-1zM12 9h1v1h-1zM13 9h1v1h-1zM18 1h1v1h-1zM19 1h1v1h-1zM20 1h1v1h-1zM17 2h1v1h-1zM21 2h1v1h-1zM17 3h1v1h-1zM21 3h1v1h-1zM17 4h1v1h-1zM20 4h1v1h-1zM21 4h1v1h-1zM17 5h1v1h-1zM19 5h1v1h-1zM21 5h1v1h-1zM17 6h1v1h-1zM18 6h1v1h-1zM21 6h1v1h-1zM17 7h1v1h-1zM21 7h1v1h-1zM17 8h1v1h-1zM21 8h1v1h-1zM18 9h1v1h-1zM19 9h1v1h-1zM20 9h1v1h-1zM26 1h1v1h-1zM27 1h1v1h-1zM28 1h1v1h-1zM25 2h1v1h-1zM29 2h1v1h-1zM25 3h1v1h-1zM29 3h1v1h-1zM25 4h1v1h-1zM28 4h1v1h-1zM29 4h1v1h-1zM25 5h1v1h-1zM27 5h1v1h-1zM29 5h1v1h-1zM25 6h1v1h-1zM26 6h1v1h-1zM29 6h1v1h-1zM25 7h1v1h-1zM29 7h1v1h-1zM25 8h1v1h-1zM29 8h1v1h-1zM26 9h1v1h-1zM27 9h1v1h-1zM28 9h1v1h-1z" fill="#000"/><path d="M0 4h1v1h-1zM1 4h1v1h-1zM2 4h1v1h-1zM3 4h1v1h-1zM4 4h1v1h-1zM10 0h1v1h-1zM9 1h1v1h-1zM10 1h1v1h-1zM8 2h1v1h-1zM10 2h1v1h-1zM10 3h1v1h-1zM10 4h1v1h-1zM10 5h1v1h-1zM10 6h1v1h-1zM10 7h1v1h-1zM8 8h1v1h-1zM9 8h1v1h-1zM10 8h1v1h-1zM11 8h1v1h-1zM12 8h1v1h-1zM17 0h1v1h-1zM18 0h1v1h-1zM19 0h1v1h-1zM16 1h1v1h-1zM20 1h1v1h-1zM16 2h1v1h-1zM20 2h1v1h-1zM16 3h1v1h-1zM19 3h1v1h-1zM20 3h1v1h-1zM16 4h1v1h-1zM18 4h1v1h-1zM20 4h1v1h-1zM16 5h1v1h-1zM17 5h1v1h-1zM20 5h1v1h-1zM16 6h1v1h-1zM20 6h1v1h-1zM16 7h1v1h-1zM20 7h1v1h-1zM17 8h1v1h-1zM18 8h1v1h-1zM19 8h1v1h-1zM25 0h1v1h-1zM26 0h1v1h-1zM27 0h1v1h-1zM24 1h1v1h-1zM28 1h1v1h-1zM24 2h1v1h-1zM28 2h1v1h-1zM24 3h1v1h-1zM27 3h1v1h-1zM28 3h1v1h-1zM24 4h1v1h-1zM26 4h1v1h-1zM28 4h1v1h-1zM24 5h1v1h-1zM25 5h1v1h-1zM28 5h1v1h-1zM24 6h1v1h-1zM28 6h1v1h-1zM24 7h1v1h-1zM28 7h1v1h-1zM25 8h1v1h-1zM26 8h1v1h-1zM27 8h1v1h-1z" fill="#fff2b8"/></svg>
<svg class="a" style="left:797px;top:1042px;shape-rendering:crispEdges" width="8" height="10" viewBox="0 0 8 10"><path d="M2 1h1v1h-1zM3 1h1v1h-1zM4 1h1v1h-1zM1 2h1v1h-1zM5 2h1v1h-1zM1 3h1v1h-1zM5 3h1v1h-1zM1 4h1v1h-1zM4 4h1v1h-1zM5 4h1v1h-1zM1 5h1v1h-1zM3 5h1v1h-1zM5 5h1v1h-1zM1 6h1v1h-1zM2 6h1v1h-1zM5 6h1v1h-1zM1 7h1v1h-1zM5 7h1v1h-1zM1 8h1v1h-1zM5 8h1v1h-1zM2 9h1v1h-1zM3 9h1v1h-1zM4 9h1v1h-1z" fill="#000"/><path d="M1 0h1v1h-1zM2 0h1v1h-1zM3 0h1v1h-1zM0 1h1v1h-1zM4 1h1v1h-1zM0 2h1v1h-1zM4 2h1v1h-1zM0 3h1v1h-1zM3 3h1v1h-1zM4 3h1v1h-1zM0 4h1v1h-1zM2 4h1v1h-1zM4 4h1v1h-1zM0 5h1v1h-1zM1 5h1v1h-1zM4 5h1v1h-1zM0 6h1v1h-1zM4 6h1v1h-1zM0 7h1v1h-1zM4 7h1v1h-1zM1 8h1v1h-1zM2 8h1v1h-1zM3 8h1v1h-1z" fill="#fff2b8"/></svg>
<svg class="a" style="left:1023px;top:1042px;shape-rendering:crispEdges" width="24" height="10" viewBox="0 0 24 10"><path d="M3 1h1v1h-1zM2 2h1v1h-1zM3 2h1v1h-1zM1 3h1v1h-1zM3 3h1v1h-1zM3 4h1v1h-1zM3 5h1v1h-1zM3 6h1v1h-1zM3 7h1v1h-1zM3 8h1v1h-1zM1 9h1v1h-1zM2 9h1v1h-1zM3 9h1v1h-1zM4 9h1v1h-1zM5 9h1v1h-1zM10 1h1v1h-1zM11 1h1v1h-1zM12 1h1v1h-1zM9 2h1v1h-1zM13 2h1v1h-1zM9 3h1v1h-1zM13 3h1v1h-1zM9 4h1v1h-1zM12 4h1v1h-1zM13 4h1v1h-1zM9 5h1v1h-1zM11 5h1v1h-1zM13 5h1v1h-1zM9 6h1v1h-1zM10 6h1v1h-1zM13 6h1v1h-1zM9 7h1v1h-1zM13 7h1v1h-1zM9 8h1v1h-1zM13 8h1v1h-1zM10 9h1v1h-1zM11 9h1v1h-1zM12 9h1v1h-1zM18 1h1v1h-1zM19 1h1v1h-1zM20 1h1v1h-1zM17 2h1v1h-1zM21 2h1v1h-1zM17 3h1v1h-1zM21 3h1v1h-1zM17 4h1v1h-1zM20 4h1v1h-1zM21 4h1v1h-1zM17 5h1v1h-1zM19 5h1v1h-1zM21 5h1v1h-1zM17 6h1v1h-1zM18 6h1v1h-1zM21 6h1v1h-1zM17 7h1v1h-1zM21 7h1v1h-1zM17 8h1v1h-1zM21 8h1v1h-1zM18 9h1v1h-1zM19 9h1v1h-1zM20 9h1v1h-1z" fill="#000"/><path d="M2 0h1v1h-1zM1 1h1v1h-1zM2 1h1v1h-1zM0 2h1v1h-1zM2 2h1v1h-1zM2 3h1v1h-1zM2 4h1v1h-1zM2 5h1v1h-1zM2 6h1v1h-1zM2 7h1v1h-1zM0 8h1v1h-1zM1 8h1v1h-1zM2 8h1v1h-1zM3 8h1v1h-1zM4 8h1v1h-1zM9 0h1v1h-1zM10 0h1v1h-1zM11 0h1v1h-1zM8 1h1v1h-1zM12 1h1v1h-1zM8 2h1v1h-1zM12 2h1v1h-1zM8 3h1v1h-1zM11 3h1v1h-1zM12 3h1v1h-1zM8 4h1v1h-1zM10 4h1v1h-1zM12 4h1v1h-1zM8 5h1v1h-1zM9 5h1v1h-1zM12 5h1v1h-1zM8 6h1v1h-1zM12 6h1v1h-1zM8 7h1v1h-1zM12 7h1v1h-1zM9 8h1v1h-1zM10 8h1v1h-1zM11 8h1v1h-1zM17 0h1v1h-1zM18 0h1v1h-1zM19 0h1v1h-1zM16 1h1v1h-1zM20 1h1v1h-1zM16 2h1v1h-1zM20 2h1v1h-1zM16 3h1v1h-1zM19 3h1v1h-1zM20 3h1v1h-1zM16 4h1v1h-1zM18 4h1v1h-1zM20 4h1v1h-1zM16 5h1v1h-1zM17 5h1v1h-1zM20 5h1v1h-1zM16 6h1v1h-1zM20 6h1v1h-1zM16 7h1v1h-1zM20 7h1v1h-1zM17 8h1v1h-1zM18 8h1v1h-1zM19 8h1v1h-1z" fill="#fff2b8"/></svg>
<svg class="a" style="left:1250px;top:1042px;shape-rendering:crispEdges" width="24" height="10" viewBox="0 0 24 10"><path d="M2 1h1v1h-1zM3 1h1v1h-1zM4 1h1v1h-1zM1 2h1v1h-1zM5 2h1v1h-1zM5 3h1v1h-1zM5 4h1v1h-1zM4 5h1v1h-1zM3 6h1v1h-1zM2 7h1v1h-1zM1 8h1v1h-1zM1 9h1v1h-1zM2 9h1v1h-1zM3 9h1v1h-1zM4 9h1v1h-1zM5 9h1v1h-1zM10 1h1v1h-1zM11 1h1v1h-1zM12 1h1v1h-1zM9 2h1v1h-1zM13 2h1v1h-1zM9 3h1v1h-1zM13 3h1v1h-1zM9 4h1v1h-1zM12 4h1v1h-1zM13 4h1v1h-1zM9 5h1v1h-1zM11 5h1v1h-1zM13 5h1v1h-1zM9 6h1v1h-1zM10 6h1v1h-1zM13 6h1v1h-1zM9 7h1v1h-1zM13 7h1v1h-1zM9 8h1v1h-1zM13 8h1v1h-1zM10 9h1v1h-1zM11 9h1v1h-1zM12 9h1v1h-1zM18 1h1v1h-1zM19 1h1v1h-1zM20 1h1v1h-1zM17 2h1v1h-1zM21 2h1v1h-1zM17 3h1v1h-1zM21 3h1v1h-1zM17 4h1v1h-1zM20 4h1v1h-1zM21 4h1v1h-1zM17 5h1v1h-1zM19 5h1v1h-1zM21 5h1v1h-1zM17 6h1v1h-1zM18 6h1v1h-1zM21 6h1v1h-1zM17 7h1v1h-1zM21 7h1v1h-1zM17 8h1v1h-1zM21 8h1v1h-1zM18 9h1v1h-1zM19 9h1v1h-1zM20 9h1v1h-1z" fill="#000"/><path d="M1 0h1v1h-1zM2 0h1v1h-1zM3 0h1v1h-1zM0 1h1v1h-1zM4 1h1v1h-1zM4 2h1v1h-1zM4 3h1v1h-1zM3 4h1v1h-1zM2 5h1v1h-1zM1 6h1v1h-1zM0 7h1v1h-1zM0 8h1v1h-1zM1 8h1v1h-1zM2 8h1v1h-1zM3 8h1v1h-1zM4 8h1v1h-1zM9 0h1v1h-1zM10 0h1v1h-1zM11 0h1v1h-1zM8 1h1v1h-1zM12 1h1v1h-1zM8 2h1v1h-1zM12 2h1v1h-1zM8 3h1v1h-1zM11 3h1v1h-1zM12 3h1v1h-1zM8 4h1v1h-1zM10 4h1v1h-1zM12 4h1v1h-1zM8 5h1v1h-1zM9 5h1v1h-1zM12 5h1v1h-1zM8 6h1v1h-1zM12 6h1v1h-1zM8 7h1v1h-1zM12 7h1v1h-1zM9 8h1v1h-1zM10 8h1v1h-1zM11 8h1v1h-1zM17 0h1v1h-1zM18 0h1v1h-1zM19 0h1v1h-1zM16 1h1v1h-1zM20 1h1v1h-1zM16 2h1v1h-1zM20 2h1v1h-1zM16 3h1v1h-1zM19 3h1v1h-1zM20 3h1v1h-1zM16 4h1v1h-1zM18 4h1v1h-1zM20 4h1v1h-1zM16 5h1v1h-1zM17 5h1v1h-1zM20 5h1v1h-1zM16 6h1v1h-1zM20 6h1v1h-1zM16 7h1v1h-1zM20 7h1v1h-1zM17 8h1v1h-1zM18 8h1v1h-1zM19 8h1v1h-1z" fill="#fff2b8"/></svg>
<svg class="a" style="left:1476px;top:1042px;shape-rendering:crispEdges" width="24" height="10" viewBox="0 0 24 10"><path d="M1 1h1v1h-1zM2 1h1v1h-1zM3 1h1v1h-1zM4 1h1v1h-1zM5 1h1v1h-1zM5 2h1v1h-1zM4 3h1v1h-1zM3 4h1v1h-1zM2 5h1v1h-1zM3 5h1v1h-1zM4 5h1v1h-1zM5 6h1v1h-1zM5 7h1v1h-1zM1 8h1v1h-1zM5 8h1v1h-1zM2 9h1v1h-1zM3 9h1v1h-1zM4 9h1v1h-1zM10 1h1v1h-1zM11 1h1v1h-1zM12 1h1v1h-1zM9 2h1v1h-1zM13 2h1v1h-1zM9 3h1v1h-1zM13 3h1v1h-1zM9 4h1v1h-1zM12 4h1v1h-1zM13 4h1v1h-1zM9 5h1v1h-1zM11 5h1v1h-1zM13 5h1v1h-1zM9 6h1v1h-1zM10 6h1v1h-1zM13 6h1v1h-1zM9 7h1v1h-1zM13 7h1v1h-1zM9 8h1v1h-1zM13 8h1v1h-1zM10 9h1v1h-1zM11 9h1v1h-1zM12 9h1v1h-1zM18 1h1v1h-1zM19 1h1v1h-1zM20 1h1v1h-1zM17 2h1v1h-1zM21 2h1v1h-1zM17 3h1v1h-1zM21 3h1v1h-1zM17 4h1v1h-1zM20 4h1v1h-1zM21 4h1v1h-1zM17 5h1v1h-1zM19 5h1v1h-1zM21 5h1v1h-1zM17 6h1v1h-1zM18 6h1v1h-1zM21 6h1v1h-1zM17 7h1v1h-1zM21 7h1v1h-1zM17 8h1v1h-1zM21 8h1v1h-1zM18 9h1v1h-1zM19 9h1v1h-1zM20 9h1v1h-1z" fill="#000"/><path d="M0 0h1v1h-1zM1 0h1v1h-1zM2 0h1v1h-1zM3 0h1v1h-1zM4 0h1v1h-1zM4 1h1v1h-1zM3 2h1v1h-1zM2 3h1v1h-1zM1 4h1v1h-1zM2 4h1v1h-1zM3 4h1v1h-1zM4 5h1v1h-1zM4 6h1v1h-1zM0 7h1v1h-1zM4 7h1v1h-1zM1 8h1v1h-1zM2 8h1v1h-1zM3 8h1v1h-1zM9 0h1v1h-1zM10 0h1v1h-1zM11 0h1v1h-1zM8 1h1v1h-1zM12 1h1v1h-1zM8 2h1v1h-1zM12 2h1v1h-1zM8 3h1v1h-1zM11 3h1v1h-1zM12 3h1v1h-1zM8 4h1v1h-1zM10 4h1v1h-1zM12 4h1v1h-1zM8 5h1v1h-1zM9 5h1v1h-1zM12 5h1v1h-1zM8 6h1v1h-1zM12 6h1v1h-1zM8 7h1v1h-1zM12 7h1v1h-1zM9 8h1v1h-1zM10 8h1v1h-1zM11 8h1v1h-1zM17 0h1v1h-1zM18 0h1v1h-1zM19 0h1v1h-1zM16 1h1v1h-1zM20 1h1v1h-1zM16 2h1v1h-1zM20 2h1v1h-1zM16 3h1v1h-1zM19 3h1v1h-1zM20 3h1v1h-1zM16 4h1v1h-1zM18 4h1v1h-1zM20 4h1v1h-1zM16 5h1v1h-1zM17 5h1v1h-1zM20 5h1v1h-1zM16 6h1v1h-1zM20 6h1v1h-1zM16 7h1v1h-1zM20 7h1v1h-1zM17 8h1v1h-1zM18 8h1v1h-1zM19 8h1v1h-1z" fill="#fff2b8"/></svg>
<svg class="a" style="left:1702px;top:1042px;shape-rendering:crispEdges" width="24" height="10" viewBox="0 0 24 10"><path d="M4 1h1v1h-1zM3 2h1v1h-1zM4 2h1v1h-1zM2 3h1v1h-1zM4 3h1v1h-1zM1 4h1v1h-1zM4 4h1v1h-1zM1 5h1v1h-1zM4 5h1v1h-1zM1 6h1v1h-1zM2 6h1v1h-1zM3 6h1v1h-1zM4 6h1v1h-1zM5 6h1v1h-1zM4 7h1v1h-1zM4 8h1v1h-1zM4 9h1v1h-1zM10 1h1v1h-1zM11 1h1v1h-1zM12 1h1v1h-1zM9 2h1v1h-1zM13 2h1v1h-1zM9 3h1v1h-1zM13 3h1v1h-1zM9 4h1v1h-1zM12 4h1v1h-1zM13 4h1v1h-1zM9 5h1v1h-1zM11 5h1v1h-1zM13 5h1v1h-1zM9 6h1v1h-1zM10 6h1v1h-1zM13 6h1v1h-1zM9 7h1v1h-1zM13 7h1v1h-1zM9 8h1v1h-1zM13 8h1v1h-1zM10 9h1v1h-1zM11 9h1v1h-1zM12 9h1v1h-1zM18 1h1v1h-1zM19 1h1v1h-1zM20 1h1v1h-1zM17 2h1v1h-1zM21 2h1v1h-1zM17 3h1v1h-1zM21 3h1v1h-1zM17 4h1v1h-1zM20 4h1v1h-1zM21 4h1v1h-1zM17 5h1v1h-1zM19 5h1v1h-1zM21 5h1v1h-1zM17 6h1v1h-1zM18 6h1v1h-1zM21 6h1v1h-1zM17 7h1v1h-1zM21 7h1v1h-1zM17 8h1v1h-1zM21 8h1v1h-1zM18 9h1v1h-1zM19 9h1v1h-1zM20 9h1v1h-1z" fill="#000"/><path d="M3 0h1v1h-1zM2 1h1v1h-1zM3 1h1v1h-1zM1 2h1v1h-1zM3 2h1v1h-1zM0 3h1v1h-1zM3 3h1v1h-1zM0 4h1v1h-1zM3 4h1v1h-1zM0 5h1v1h-1zM1 5h1v1h-1zM2 5h1v1h-1zM3 5h1v1h-1zM4 5h1v1h-1zM3 6h1v1h-1zM3 7h1v1h-1zM3 8h1v1h-1zM9 0h1v1h-1zM10 0h1v1h-1zM11 0h1v1h-1zM8 1h1v1h-1zM12 1h1v1h-1zM8 2h1v1h-1zM12 2h1v1h-1zM8 3h1v1h-1zM11 3h1v1h-1zM12 3h1v1h-1zM8 4h1v1h-1zM10 4h1v1h-1zM12 4h1v1h-1zM8 5h1v1h-1zM9 5h1v1h-1zM12 5h1v1h-1zM8 6h1v1h-1zM12 6h1v1h-1zM8 7h1v1h-1zM12 7h1v1h-1zM9 8h1v1h-1zM10 8h1v1h-1zM11 8h1v1h-1zM17 0h1v1h-1zM18 0h1v1h-1zM19 0h1v1h-1zM16 1h1v1h-1zM20 1h1v1h-1zM16 2h1v1h-1zM20 2h1v1h-1zM16 3h1v1h-1zM19 3h1v1h-1zM20 3h1v1h-1zM16 4h1v1h-1zM18 4h1v1h-1zM20 4h1v1h-1zM16 5h1v1h-1zM17 5h1v1h-1zM20 5h1v1h-1zM16 6h1v1h-1zM20 6h1v1h-1zM16 7h1v1h-1zM20 7h1v1h-1zM17 8h1v1h-1zM18 8h1v1h-1zM19 8h1v1h-1z" fill="#fff2b8"/></svg>
<div class="t" style="left:1910.00px;top:1042px;font:normal 12px/12px 'Liberation Mono';color:#0000ff;transform:scaleX(0.9286);-webkit-text-stroke:0;">Z</div>
<div class="a" style="left:40px;top:1052px;width:1880px;height:28px;background:#d9d9d9;"></div>
<div class="a" style="left:297px;top:1052px;width:1621px;height:1px;background:#8a8a8a;"></div>
<div class="a" style="left:40px;top:1053px;width:1880px;height:1px;background:#f4f4f4;"></div>
<div class="a" style="left:40px;top:1054px;width:356px;height:25px;background:#d9d9d9;border-top:1px solid #8a8a8a;border-left:1px solid #8a8a8a;border-bottom:1px solid #fff;border-right:1px solid #fff"></div>
<div class="t" style="left:42.50px;top:1060px;font:normal 16px/16px 'Liberation Sans';color:#000;transform:scaleX(1.1364);">Fluka:</div>
<div class="t" style="left:398.70px;top:1060px;font:normal 16px/16px 'Liberation Sans';color:#1a6a1a;transform:scaleX(1.1583);">x:</div>
<div class="t" style="left:419.30px;top:1060px;font:normal 16px/16px 'Liberation Sans';color:#000;transform:scaleX(1.2053);">38.51852265</div>
<div class="t" style="left:583.00px;top:1060px;font:normal 16px/16px 'Liberation Sans';color:#1a6a1a;transform:scaleX(1.2083);">y:</div>
<div class="t" style="left:603.60px;top:1060px;font:normal 16px/16px 'Liberation Sans';color:#000;transform:scaleX(1.1556);">0</div>
<div class="t" style="left:768.20px;top:1060px;font:normal 16px/16px 'Liberation Sans';color:#1a6a1a;transform:scaleX(1.1333);">z:</div>
<div class="t" style="left:788.50px;top:1060px;font:normal 16px/16px 'Liberation Sans';color:#000;transform:scaleX(1.2074);">100.5835098</div>
<div class="a" style="left:946px;top:1055px;width:931px;height:24px;background:#d9d9d9;border-top:1px solid #8a8a8a;border-left:1px solid #8a8a8a;border-bottom:1px solid #fff;border-right:1px solid #fff"></div>
<div class="t" style="left:947.60px;top:1060px;font:normal 16px/16px 'Liberation Sans';color:#10109a;transform:scaleX(1.1880);">Free viewports motion</div>
<div class="a" style="left:1879px;top:1058px;width:20px;height:20px;background:#d9d9d9;border-top:1px solid #fff;border-left:1px solid #fff;border-bottom:1px solid #888;border-right:1px solid #888"></div>
<svg class="a" style="left:1882px;top:1061px;" width="14" height="13" viewBox="0 0 14 13"><rect x="0.5" y="0.5" width="13" height="12" fill="#222" stroke="#777" stroke-width="1"/><path d="M2.5 3L5 5L2.5 7" stroke="#ccc" stroke-width="0.8" fill="none"/></svg>
<div class="a" style="left:1900px;top:1058px;width:20px;height:20px;background:#d9d9d9;border-top:1px solid #fff;border-left:1px solid #fff;border-bottom:1px solid #888;border-right:1px solid #888"></div>
<svg class="a" style="left:1902px;top:1059px;" width="16" height="16" viewBox="0 0 16 16"><path d="M2 14L11 5" stroke="#2a60c0" stroke-width="3" stroke-linecap="round"/><path d="M13 1L10 5" stroke="#aac" stroke-width="1.5"/><path d="M3 3Q4 0 7 2L6 5L14 14L13 15L4 6L1 7Q-1 5 1 3Z" fill="#fff" stroke="#111" stroke-width="1"/></svg>
</body></html>
